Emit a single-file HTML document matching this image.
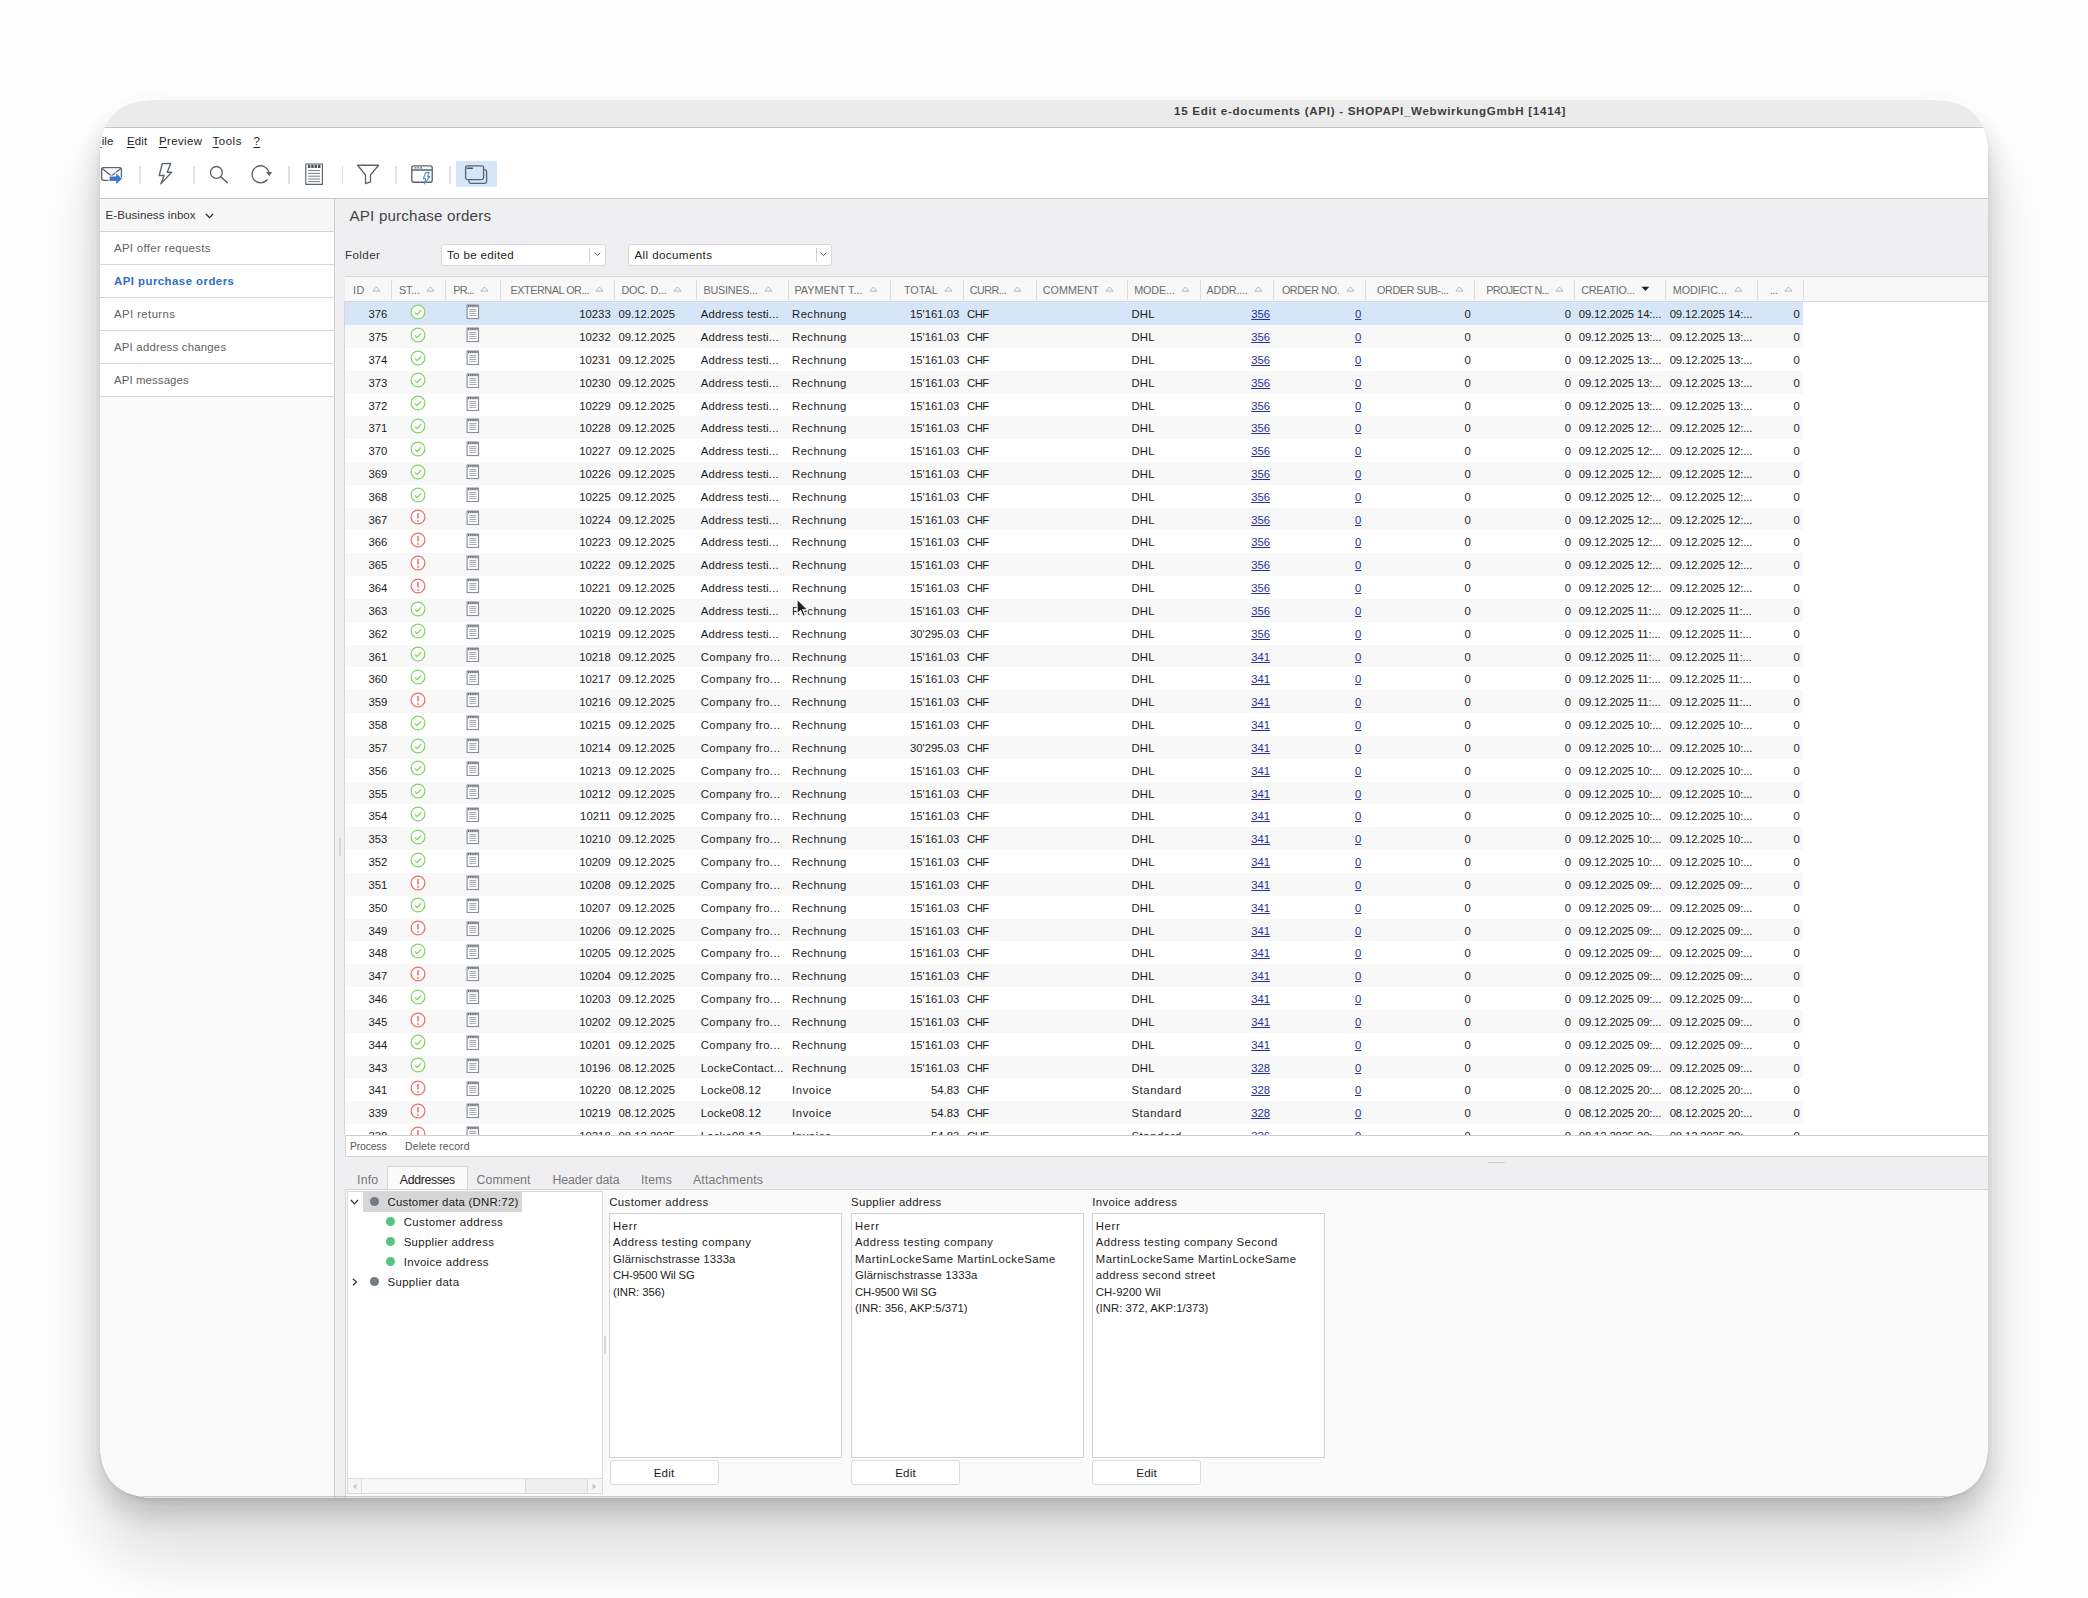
<!DOCTYPE html>
<html lang="en"><head><meta charset="utf-8"><title>15 Edit e-documents (API)</title>
<style>
*{box-sizing:border-box;margin:0;padding:0}
html,body{width:2088px;height:1598px;overflow:hidden;background:#fefefe}
body{position:relative;font-family:"Liberation Sans",sans-serif;font-size:11.3px;color:#1c1c1c}
#win{position:absolute;left:100px;top:100px;width:1888px;height:1397.6px;overflow:hidden;border-radius:46px;background:#fff;clip-path:path('M1828.0 0.0 L1838.4 0.2 L1845.5 0.9 L1851.6 2.0 L1857.1 3.5 L1862.0 5.4 L1866.5 7.8 L1870.6 10.6 L1874.2 13.8 L1877.4 17.4 L1880.2 21.5 L1882.6 26.0 L1884.5 30.9 L1886.0 36.4 L1887.1 42.5 L1887.8 49.6 L1888.0 60.0 L1888.0 1337.6 L1887.8 1348.0 L1887.1 1355.1 L1886.0 1361.2 L1884.5 1366.7 L1882.6 1371.6 L1880.2 1376.1 L1877.4 1380.2 L1874.2 1383.8 L1870.6 1387.0 L1866.5 1389.8 L1862.0 1392.2 L1857.1 1394.1 L1851.6 1395.6 L1845.5 1396.7 L1838.4 1397.4 L1828.0 1397.6 L60.0 1397.6 L49.6 1397.4 L42.5 1396.7 L36.4 1395.6 L30.9 1394.1 L26.0 1392.2 L21.5 1389.8 L17.4 1387.0 L13.8 1383.8 L10.6 1380.2 L7.8 1376.1 L5.4 1371.6 L3.5 1366.7 L2.0 1361.2 L0.9 1355.1 L0.2 1348.0 L0.0 1337.6 L0.0 60.0 L0.2 49.6 L0.9 42.5 L2.0 36.4 L3.5 30.9 L5.4 26.0 L7.8 21.5 L10.6 17.4 L13.8 13.8 L17.4 10.6 L21.5 7.8 L26.0 5.4 L30.9 3.5 L36.4 2.0 L42.5 0.9 L49.6 0.2 L60.0 0.0Z')}
#shadow{position:absolute;left:100px;top:100px;width:1888px;height:1397.6px;border-radius:52px;box-shadow:0 4px 8.1px -4.4px rgba(0,0,0,.19),0 52.4px 64.4px 5.8px rgba(0,0,0,.126),0 15.5px 21.8px 3.3px rgba(0,0,0,.131)}
.abs{position:absolute}
/* title */
#title{position:absolute;left:0;top:0;width:100%;height:28px;background:#ebebeb;border-bottom:1px solid #c4c4c4}
#title span{position:absolute;left:1074px;top:0;line-height:21.5px;font-weight:bold;font-size:11.6px;letter-spacing:.69px;color:#3e3e3e;white-space:nowrap}
/* menu */
#menu{position:absolute;left:0;top:28px;width:100%;height:27px;background:#fff}
#menu span{position:absolute;top:0;line-height:26.6px;font-size:11.4px;letter-spacing:.35px;color:#222;white-space:nowrap}
#menu u{text-decoration:underline;text-underline-offset:1.5px}
/* toolbar */
#tb{position:absolute;left:0;top:55px;width:100%;height:44px;background:#fff;border-bottom:1px solid #c9c9cb}
#tb svg{position:absolute;overflow:visible}
.sep{position:absolute;top:10.5px;width:1.6px;height:18px;background:#e1e1e3}
#act{position:absolute;left:356px;top:6.2px;width:41px;height:25.7px;background:#d5e6f8}
/* sidebar */
#side{position:absolute;left:0;top:99px;width:235px;bottom:0;background:#f9f9f9;border-right:1px solid #cfcfd1}
#side .hd{height:33px;line-height:32px;padding-left:5.6px;border-bottom:1px solid #d4d4d4;background:#f7f7f7;color:#333;font-size:11.5px;letter-spacing:.14px;white-space:nowrap}
#side .it{height:33px;line-height:32px;padding-left:14px;border-bottom:1px solid #d6d6d6;background:#fff;color:#616161;font-size:11.4px;letter-spacing:.36px;white-space:nowrap}
#side .it.on{color:#2f6ec4;font-weight:bold}
/* main */
#main{position:absolute;left:235px;top:99px;right:0;bottom:0;background:#efeff1}
#main h1{position:absolute;left:14.5px;top:5.5px;letter-spacing:.17px;font-weight:normal;font-size:15.2px;line-height:22px;color:#444;white-space:nowrap}
.lbl{position:absolute;white-space:nowrap}
.combo{position:absolute;height:22px;background:#fff;border:1px solid #d9d9db;border-radius:3px;line-height:20px;padding-left:5.5px;font-size:11.6px;letter-spacing:.25px;color:#222;white-space:nowrap}
.combo i{position:absolute;right:14.5px;top:3px;bottom:3px;width:1px;background:#d0d0d0}
.combo svg{position:absolute;right:4px;top:7.5px}
/* grid */
#grid{position:absolute;left:245px;top:175.5px;right:0;height:860px}
#ghead{position:absolute;left:0;top:0;right:0;height:26.7px;background:#f8f8f8;border-top:1.5px solid #d8d8da;border-bottom:1px solid #d8d8da}
.ht{position:absolute;top:1px;line-height:24px;white-space:nowrap;color:#6d6d6d;font-size:10.8px}
.ar{position:absolute;top:9.6px}
.hs{position:absolute;top:3px;height:20px;width:1px;background:#dcdcdc}
#gbody{position:absolute;left:-1px;top:26.7px;right:0;border-left:1px solid #d6d6d8;height:832.6px;background:#fff;overflow:hidden}
.r{position:absolute;left:0;width:1458.2px;height:22.83px;background:#fff}
.r.odd{background:#f8f8f8}
.r.sel{background:#d6e6f8}
.c{position:absolute;top:0;height:22.83px;line-height:25.6px;padding:0 3.3px 0 4.5px;white-space:nowrap;overflow:hidden}
.c.n{text-align:right}
.c.t{letter-spacing:.33px}
.c.lk u{color:#2a2f9a;text-decoration:underline}
.c.ic1,.c.ic2{padding:0;text-align:center;line-height:0}
.st{position:absolute;left:50%;margin-left:-7.6px;top:1.7px;width:16px;height:16px}
.dc{position:absolute;left:50%;margin-left:-6.4px;top:2.1px;width:13.6px;height:15.5px}
/* action bar */
#abar{position:absolute;left:244.5px;top:1034.8px;right:0;height:22.7px;background:#fff;border-top:1px solid #cfcfd1;border-bottom:1px solid #d4d4d6;border-left:1px solid #d8d8da}
#abar span{position:absolute;top:0;line-height:21.6px;font-size:10.4px;color:#585858;white-space:nowrap;letter-spacing:.12px}
/* tabs */
.tab{position:absolute;top:1066px;height:23.5px;line-height:28.4px;font-size:12.3px;color:#777;white-space:nowrap;letter-spacing:.25px}
.tab.on{line-height:26.4px;letter-spacing:-.2px;color:#222;background:#fafafa;border:1px solid #d6d6d8;border-bottom:0;border-radius:2px 2px 0 0;text-align:center}
#panel{position:absolute;left:244.5px;top:1088.5px;right:0;bottom:0;background:#fafafa;border-top:1px solid #d6d6d8;border-left:1px solid #d6d6d8}
#tree{position:absolute;left:1px;top:1px;width:256px;height:303px;background:#fff;border:1px solid #dadada}
.tr{position:absolute;left:0;height:20.1px;line-height:20.1px;white-space:nowrap;font-size:11.4px;letter-spacing:.3px;color:#1c1c1c}
.dot{position:absolute;border-radius:50%;width:9px;height:9px}
.addrl{position:absolute;top:4.3px;line-height:16px;font-size:11.4px;letter-spacing:.42px;white-space:nowrap}
.addr{position:absolute;top:23.7px;width:233.5px;height:245.3px;background:#fff;border:1px solid #d2d2d4;padding:3.5px 3.1px;font-size:11.3px;line-height:16.5px;white-space:nowrap;overflow:hidden}
.btn{position:absolute;top:270.5px;width:109px;height:24.5px;background:#fff;border:1px solid #dadadc;border-radius:3px;text-align:center;line-height:23px;font-size:11.6px;letter-spacing:.4px}
#hsb{position:absolute;left:0;right:0;bottom:0;height:14.5px;background:#efeff0;border-top:1px solid #dcdcdc}
#hsb b{position:absolute;top:0;bottom:0;display:block}
#hsb .l{left:0;width:14.5px;background:#f6f6f6;border-right:1px solid #dcdcdc}
#hsb .rr{right:0;width:15px;background:#f6f6f6;border-left:1px solid #dcdcdc}
#hsb .th{left:14.5px;width:163.5px;background:#f8f8f8;border-right:1px solid #dcdcdc}
#edge{position:absolute;left:0;bottom:0;width:100%;height:1.6px;background:rgba(120,125,135,.38)}

</style></head>
<body>
<div id="shadow"></div>
<div id="win">
<div id="title"><span style="letter-spacing:0.703px">15 Edit e-documents (API) - SHOPAPI_WebwirkungGmbH [1414]</span></div>
<div id="menu">
<span style="left:-5.5px;letter-spacing:0.186px"><u>F</u>ile</span>
<span style="left:27px;letter-spacing:0.186px"><u>E</u>dit</span>
<span style="left:59px;letter-spacing:0.397px"><u>P</u>review</span>
<span style="left:112.5px;letter-spacing:0.577px"><u>T</u>ools</span>
<span style="left:153.5px"><u>?</u></span>
</div>
<div id="tb">
<div id="act"></div>
<div class="sep" style="left:39px"></div>
<div class="sep" style="left:93px"></div>
<div class="sep" style="left:188px"></div>
<div class="sep" style="left:241.5px"></div>
<div class="sep" style="left:295px"></div>
<div class="sep" style="left:349px"></div>
<svg width="500" height="44" viewBox="0 0 500 44" style="left:0;top:0" fill="none" stroke="#5d636c" stroke-width="1.35" stroke-linejoin="round" stroke-linecap="round">
<!-- mail send -->
<rect x="1.6" y="12.6" width="19.8" height="12.8" rx="1.8"/>
<path d="M2.2 13.4l9.3 7.6 9.3-7.6"/>
<path d="M9.4 21h6.4v-3.6l6.6 6.3-6.6 6.3v-3.6H9.4z" fill="#3a78cc" stroke="#fff" stroke-width="1"/>
<!-- bolt -->
<path d="M62.3 8.7l8.4-.3-3.5 8.8h4.4L60.8 28.9l3.3-8.4h-4.9z"/>
<!-- search -->
<circle cx="116.4" cy="17.4" r="5.9"/>
<path d="M120.7 21.7l6.6 5.9" stroke-width="1.5"/>
<!-- refresh -->
<path d="M169 18.2a8.5 8.5 0 1 0-1.9 6.6"/>
<path d="M166 16.9h6.2l-3 4.3z" fill="#5d636c" stroke="none"/>
<!-- document -->
<rect x="205.8" y="9" width="16.6" height="20.4" fill="#fff" stroke-width="1.15"/>
<path d="M207.9 11.3h12.6" stroke="#4f555e" stroke-width="3.2" stroke-dasharray="2.5 .85" stroke-linecap="butt"/>
<path d="M208.6 15.6h11M208.6 18.4h11M208.6 21.2h11M208.6 24h11M208.6 26.6h11" stroke-width=".9" stroke="#666c75"/>
<!-- funnel -->
<path d="M257.6 10.2h21l-8.1 9.7v6.9l-5 1.8v-8.7z"/>
<!-- window bolt -->
<rect x="311.8" y="10.8" width="20.4" height="16.4" rx="2"/>
<path d="M312 15h20"/>
<path d="M315 12.9h1M317.8 12.9h1M320.6 12.9h1" stroke-width="1.1"/>
<path d="M325.6 17.6l3.6-.2-1.6 4.2h2.2l-5.6 7.4 1.5-5.2h-2.3z" stroke="#4b8ddd" fill="#fff" stroke-width="1.1"/>
<!-- windows -->
<path d="M369 25.2v1.4a1.8 1.8 0 0 0 1.8 1.8h14a1.8 1.8 0 0 0 1.8-1.8v-10a1.8 1.8 0 0 0-1.8-1.8h-.6"/>
<rect x="365.6" y="10.8" width="18" height="13.8" rx="1.8"/>
<path d="M367.4 13.2h5" stroke-width="1.5" stroke="#4f555e"/>
</svg>
</div>
<div id="side">
<div class="hd"><span style="letter-spacing:0.076px">E-Business inbox</span> <svg width="9" height="6" viewBox="0 0 9 6" style="margin-left:6px;vertical-align:0"><path d="M1 1l3.5 3.6L8 1" fill="none" stroke="#333" stroke-width="1.3"/></svg></div>
<div class="it" style="letter-spacing:0.325px">API offer requests</div>
<div class="it on" style="letter-spacing:0.471px">API purchase orders</div>
<div class="it" style="letter-spacing:0.402px">API returns</div>
<div class="it" style="letter-spacing:0.212px">API address changes</div>
<div class="it" style="letter-spacing:0.113px">API messages</div>
</div>
<div id="main">
<h1 style="letter-spacing:0.169px">API purchase orders</h1>
<span class="lbl" style="left:10px;top:45.3px;line-height:21px;font-size:11.6px;letter-spacing:0.405px;color:#333">Folder</span>
<div class="combo" style="left:105.5px;top:44.7px;width:165px;letter-spacing:0.321px">To be edited<i></i><svg width="7" height="5" viewBox="0 0 7 5"><path d="M.8.8l2.7 2.8L6.2.8" fill="none" stroke="#666" stroke-width="1"/></svg></div>
<div class="combo" style="left:293px;top:44.7px;width:204px;letter-spacing:0.389px">All documents<i></i><svg width="7" height="5" viewBox="0 0 7 5"><path d="M.8.8l2.7 2.8L6.2.8" fill="none" stroke="#666" stroke-width="1"/></svg></div>
</div>
<div id="grid">
<div id="ghead">
<span class="ht" style="left:8.0px;letter-spacing:0.59px">ID</span><svg class="ar" style="left:26.5px" width="9" height="6" viewBox="0 0 9 6"><path d="M.8 5.1L4.4.9 8 5.1z" fill="none" stroke="#b7b7b7" stroke-width="1"/></svg><i class="hs" style="left:45.6px"></i>
<span class="ht" style="left:54.0px;letter-spacing:-0.18px">ST...</span><svg class="ar" style="left:81.0px" width="9" height="6" viewBox="0 0 9 6"><path d="M.8 5.1L4.4.9 8 5.1z" fill="none" stroke="#b7b7b7" stroke-width="1"/></svg><i class="hs" style="left:100.4px"></i>
<span class="ht" style="left:108.3px;letter-spacing:-0.72px">PR...</span><svg class="ar" style="left:135.3px" width="9" height="6" viewBox="0 0 9 6"><path d="M.8 5.1L4.4.9 8 5.1z" fill="none" stroke="#b7b7b7" stroke-width="1"/></svg><i class="hs" style="left:154.9px"></i>
<span class="ht" style="left:165.6px;letter-spacing:-0.45px">EXTERNAL OR...</span><svg class="ar" style="left:250.4px" width="9" height="6" viewBox="0 0 9 6"><path d="M.8 5.1L4.4.9 8 5.1z" fill="none" stroke="#b7b7b7" stroke-width="1"/></svg><i class="hs" style="left:269.0px"></i>
<span class="ht" style="left:276.4px;letter-spacing:-0.17px">DOC. D...</span><svg class="ar" style="left:327.8px" width="9" height="6" viewBox="0 0 9 6"><path d="M.8 5.1L4.4.9 8 5.1z" fill="none" stroke="#b7b7b7" stroke-width="1"/></svg><i class="hs" style="left:351.2px"></i>
<span class="ht" style="left:358.6px;letter-spacing:-0.24px">BUSINES...</span><svg class="ar" style="left:418.8px" width="9" height="6" viewBox="0 0 9 6"><path d="M.8 5.1L4.4.9 8 5.1z" fill="none" stroke="#b7b7b7" stroke-width="1"/></svg><i class="hs" style="left:442.6px"></i>
<span class="ht" style="left:449.4px;letter-spacing:0.05px">PAYMENT T...</span><svg class="ar" style="left:524.3px" width="9" height="6" viewBox="0 0 9 6"><path d="M.8 5.1L4.4.9 8 5.1z" fill="none" stroke="#b7b7b7" stroke-width="1"/></svg><i class="hs" style="left:544.6px"></i>
<span class="ht" style="left:559.0px;letter-spacing:-0.04px">TOTAL</span><svg class="ar" style="left:599.0px" width="9" height="6" viewBox="0 0 9 6"><path d="M.8 5.1L4.4.9 8 5.1z" fill="none" stroke="#b7b7b7" stroke-width="1"/></svg><i class="hs" style="left:617.6px"></i>
<span class="ht" style="left:624.8px;letter-spacing:-0.54px">CURR...</span><svg class="ar" style="left:667.5px" width="9" height="6" viewBox="0 0 9 6"><path d="M.8 5.1L4.4.9 8 5.1z" fill="none" stroke="#b7b7b7" stroke-width="1"/></svg><i class="hs" style="left:690.8px"></i>
<span class="ht" style="left:697.8px;letter-spacing:0.03px">COMMENT</span><svg class="ar" style="left:760.4px" width="9" height="6" viewBox="0 0 9 6"><path d="M.8 5.1L4.4.9 8 5.1z" fill="none" stroke="#b7b7b7" stroke-width="1"/></svg><i class="hs" style="left:782.0px"></i>
<span class="ht" style="left:789.2px;letter-spacing:-0.11px">MODE...</span><svg class="ar" style="left:836.3px" width="9" height="6" viewBox="0 0 9 6"><path d="M.8 5.1L4.4.9 8 5.1z" fill="none" stroke="#b7b7b7" stroke-width="1"/></svg><i class="hs" style="left:855.4px"></i>
<span class="ht" style="left:861.6px;letter-spacing:-0.19px">ADDR....</span><svg class="ar" style="left:909.1px" width="9" height="6" viewBox="0 0 9 6"><path d="M.8 5.1L4.4.9 8 5.1z" fill="none" stroke="#b7b7b7" stroke-width="1"/></svg><i class="hs" style="left:928.4px"></i>
<span class="ht" style="left:936.9px;letter-spacing:-0.43px">ORDER NO.</span><svg class="ar" style="left:1000.5px" width="9" height="6" viewBox="0 0 9 6"><path d="M.8 5.1L4.4.9 8 5.1z" fill="none" stroke="#b7b7b7" stroke-width="1"/></svg><i class="hs" style="left:1019.6px"></i>
<span class="ht" style="left:1032.0px;letter-spacing:-0.41px">ORDER SUB-...</span><svg class="ar" style="left:1110.1px" width="9" height="6" viewBox="0 0 9 6"><path d="M.8 5.1L4.4.9 8 5.1z" fill="none" stroke="#b7b7b7" stroke-width="1"/></svg><i class="hs" style="left:1129.2px"></i>
<span class="ht" style="left:1141.2px;letter-spacing:-0.6px">PROJECT N...</span><svg class="ar" style="left:1210.2px" width="9" height="6" viewBox="0 0 9 6"><path d="M.8 5.1L4.4.9 8 5.1z" fill="none" stroke="#b7b7b7" stroke-width="1"/></svg><i class="hs" style="left:1229.3px"></i>
<span class="ht" style="left:1236.3px;letter-spacing:-0.27px">CREATIO...</span><svg class="ar" style="left:1295.6px" width="9" height="6" viewBox="0 0 9 6"><path d="M.5.8h7.8L4.4 5.1z" fill="#222"/></svg><i class="hs" style="left:1320.2px"></i>
<span class="ht" style="left:1327.7px;letter-spacing:-0.03px">MODIFIC...</span><svg class="ar" style="left:1388.6px" width="9" height="6" viewBox="0 0 9 6"><path d="M.8 5.1L4.4.9 8 5.1z" fill="none" stroke="#b7b7b7" stroke-width="1"/></svg><i class="hs" style="left:1411.9px"></i>
<span class="ht" style="left:1424.7px;letter-spacing:-0.37px">...</span><svg class="ar" style="left:1438.6px" width="9" height="6" viewBox="0 0 9 6"><path d="M.8 5.1L4.4.9 8 5.1z" fill="none" stroke="#b7b7b7" stroke-width="1"/></svg><i class="hs" style="left:1458.0px"></i>
</div>
<div id="gbody">
<div class="r sel" style="top:0.00px"><span class="c n" style="left:0.0px;width:45.6px">376</span><span class="c ic1" style="left:45.6px;width:54.8px"><svg class="st" viewBox="0 0 16 16"><circle cx="8" cy="8" r="6.9" fill="#fff" stroke="#84d465" stroke-width="1.25"/><path d="M4.9 8.4l2.2 2.2 4-4.4" fill="none" stroke="#84d465" stroke-width="1.3"/></svg></span><span class="c ic2" style="left:100.4px;width:54.5px"><svg class="dc" viewBox="0 0 14 16"><rect x="1.1" y="1.1" width="11.8" height="13.9" fill="#fff" stroke="#8a8f97" stroke-width="1.2"/><path d="M2 2.3h10" stroke="#5a6068" stroke-width="1.9" stroke-dasharray="1.5 .7"/><path d="M3.4 5.8h7.2M3.4 7.8h7.2M3.4 9.8h7.2M3.4 11.8h7.2" stroke="#a9adb2" stroke-width="1.05"/></svg></span><span class="c n" style="left:154.9px;width:114.1px">10233</span><span class="c d" style="left:269.0px;width:82.2px">09.12.2025</span><span class="c t" style="left:351.2px;width:91.4px;letter-spacing:0.219px">Address testi...</span><span class="c t" style="left:442.6px;width:102.0px;letter-spacing:0.398px">Rechnung</span><span class="c n" style="left:544.6px;width:73.0px">15&#x27;161.03</span><span class="c t" style="left:617.6px;width:73.2px;letter-spacing:-0.559px">CHF</span><span class="c t" style="left:782.0px;width:73.4px;letter-spacing:0.195px">DHL</span><span class="c n lk" style="left:855.4px;width:73.0px"><u>356</u></span><span class="c n lk" style="left:928.4px;width:91.2px"><u>0</u></span><span class="c n" style="left:1019.6px;width:109.6px">0</span><span class="c n" style="left:1129.2px;width:100.1px">0</span><span class="c d" style="left:1229.3px;width:90.9px;letter-spacing:-0.132px">09.12.2025 14:...</span><span class="c d" style="left:1320.2px;width:91.7px;letter-spacing:-0.132px">09.12.2025 14:...</span><span class="c n" style="left:1411.9px;width:46.1px">0</span></div>
<div class="r odd" style="top:22.83px"><span class="c n" style="left:0.0px;width:45.6px">375</span><span class="c ic1" style="left:45.6px;width:54.8px"><svg class="st" viewBox="0 0 16 16"><circle cx="8" cy="8" r="6.9" fill="#fff" stroke="#84d465" stroke-width="1.25"/><path d="M4.9 8.4l2.2 2.2 4-4.4" fill="none" stroke="#84d465" stroke-width="1.3"/></svg></span><span class="c ic2" style="left:100.4px;width:54.5px"><svg class="dc" viewBox="0 0 14 16"><rect x="1.1" y="1.1" width="11.8" height="13.9" fill="#fff" stroke="#8a8f97" stroke-width="1.2"/><path d="M2 2.3h10" stroke="#5a6068" stroke-width="1.9" stroke-dasharray="1.5 .7"/><path d="M3.4 5.8h7.2M3.4 7.8h7.2M3.4 9.8h7.2M3.4 11.8h7.2" stroke="#a9adb2" stroke-width="1.05"/></svg></span><span class="c n" style="left:154.9px;width:114.1px">10232</span><span class="c d" style="left:269.0px;width:82.2px">09.12.2025</span><span class="c t" style="left:351.2px;width:91.4px;letter-spacing:0.219px">Address testi...</span><span class="c t" style="left:442.6px;width:102.0px;letter-spacing:0.398px">Rechnung</span><span class="c n" style="left:544.6px;width:73.0px">15&#x27;161.03</span><span class="c t" style="left:617.6px;width:73.2px;letter-spacing:-0.559px">CHF</span><span class="c t" style="left:782.0px;width:73.4px;letter-spacing:0.195px">DHL</span><span class="c n lk" style="left:855.4px;width:73.0px"><u>356</u></span><span class="c n lk" style="left:928.4px;width:91.2px"><u>0</u></span><span class="c n" style="left:1019.6px;width:109.6px">0</span><span class="c n" style="left:1129.2px;width:100.1px">0</span><span class="c d" style="left:1229.3px;width:90.9px;letter-spacing:-0.132px">09.12.2025 13:...</span><span class="c d" style="left:1320.2px;width:91.7px;letter-spacing:-0.132px">09.12.2025 13:...</span><span class="c n" style="left:1411.9px;width:46.1px">0</span></div>
<div class="r" style="top:45.66px"><span class="c n" style="left:0.0px;width:45.6px">374</span><span class="c ic1" style="left:45.6px;width:54.8px"><svg class="st" viewBox="0 0 16 16"><circle cx="8" cy="8" r="6.9" fill="#fff" stroke="#84d465" stroke-width="1.25"/><path d="M4.9 8.4l2.2 2.2 4-4.4" fill="none" stroke="#84d465" stroke-width="1.3"/></svg></span><span class="c ic2" style="left:100.4px;width:54.5px"><svg class="dc" viewBox="0 0 14 16"><rect x="1.1" y="1.1" width="11.8" height="13.9" fill="#fff" stroke="#8a8f97" stroke-width="1.2"/><path d="M2 2.3h10" stroke="#5a6068" stroke-width="1.9" stroke-dasharray="1.5 .7"/><path d="M3.4 5.8h7.2M3.4 7.8h7.2M3.4 9.8h7.2M3.4 11.8h7.2" stroke="#a9adb2" stroke-width="1.05"/></svg></span><span class="c n" style="left:154.9px;width:114.1px">10231</span><span class="c d" style="left:269.0px;width:82.2px">09.12.2025</span><span class="c t" style="left:351.2px;width:91.4px;letter-spacing:0.219px">Address testi...</span><span class="c t" style="left:442.6px;width:102.0px;letter-spacing:0.398px">Rechnung</span><span class="c n" style="left:544.6px;width:73.0px">15&#x27;161.03</span><span class="c t" style="left:617.6px;width:73.2px;letter-spacing:-0.559px">CHF</span><span class="c t" style="left:782.0px;width:73.4px;letter-spacing:0.195px">DHL</span><span class="c n lk" style="left:855.4px;width:73.0px"><u>356</u></span><span class="c n lk" style="left:928.4px;width:91.2px"><u>0</u></span><span class="c n" style="left:1019.6px;width:109.6px">0</span><span class="c n" style="left:1129.2px;width:100.1px">0</span><span class="c d" style="left:1229.3px;width:90.9px;letter-spacing:-0.132px">09.12.2025 13:...</span><span class="c d" style="left:1320.2px;width:91.7px;letter-spacing:-0.132px">09.12.2025 13:...</span><span class="c n" style="left:1411.9px;width:46.1px">0</span></div>
<div class="r odd" style="top:68.49px"><span class="c n" style="left:0.0px;width:45.6px">373</span><span class="c ic1" style="left:45.6px;width:54.8px"><svg class="st" viewBox="0 0 16 16"><circle cx="8" cy="8" r="6.9" fill="#fff" stroke="#84d465" stroke-width="1.25"/><path d="M4.9 8.4l2.2 2.2 4-4.4" fill="none" stroke="#84d465" stroke-width="1.3"/></svg></span><span class="c ic2" style="left:100.4px;width:54.5px"><svg class="dc" viewBox="0 0 14 16"><rect x="1.1" y="1.1" width="11.8" height="13.9" fill="#fff" stroke="#8a8f97" stroke-width="1.2"/><path d="M2 2.3h10" stroke="#5a6068" stroke-width="1.9" stroke-dasharray="1.5 .7"/><path d="M3.4 5.8h7.2M3.4 7.8h7.2M3.4 9.8h7.2M3.4 11.8h7.2" stroke="#a9adb2" stroke-width="1.05"/></svg></span><span class="c n" style="left:154.9px;width:114.1px">10230</span><span class="c d" style="left:269.0px;width:82.2px">09.12.2025</span><span class="c t" style="left:351.2px;width:91.4px;letter-spacing:0.219px">Address testi...</span><span class="c t" style="left:442.6px;width:102.0px;letter-spacing:0.398px">Rechnung</span><span class="c n" style="left:544.6px;width:73.0px">15&#x27;161.03</span><span class="c t" style="left:617.6px;width:73.2px;letter-spacing:-0.559px">CHF</span><span class="c t" style="left:782.0px;width:73.4px;letter-spacing:0.195px">DHL</span><span class="c n lk" style="left:855.4px;width:73.0px"><u>356</u></span><span class="c n lk" style="left:928.4px;width:91.2px"><u>0</u></span><span class="c n" style="left:1019.6px;width:109.6px">0</span><span class="c n" style="left:1129.2px;width:100.1px">0</span><span class="c d" style="left:1229.3px;width:90.9px;letter-spacing:-0.132px">09.12.2025 13:...</span><span class="c d" style="left:1320.2px;width:91.7px;letter-spacing:-0.132px">09.12.2025 13:...</span><span class="c n" style="left:1411.9px;width:46.1px">0</span></div>
<div class="r" style="top:91.32px"><span class="c n" style="left:0.0px;width:45.6px">372</span><span class="c ic1" style="left:45.6px;width:54.8px"><svg class="st" viewBox="0 0 16 16"><circle cx="8" cy="8" r="6.9" fill="#fff" stroke="#84d465" stroke-width="1.25"/><path d="M4.9 8.4l2.2 2.2 4-4.4" fill="none" stroke="#84d465" stroke-width="1.3"/></svg></span><span class="c ic2" style="left:100.4px;width:54.5px"><svg class="dc" viewBox="0 0 14 16"><rect x="1.1" y="1.1" width="11.8" height="13.9" fill="#fff" stroke="#8a8f97" stroke-width="1.2"/><path d="M2 2.3h10" stroke="#5a6068" stroke-width="1.9" stroke-dasharray="1.5 .7"/><path d="M3.4 5.8h7.2M3.4 7.8h7.2M3.4 9.8h7.2M3.4 11.8h7.2" stroke="#a9adb2" stroke-width="1.05"/></svg></span><span class="c n" style="left:154.9px;width:114.1px">10229</span><span class="c d" style="left:269.0px;width:82.2px">09.12.2025</span><span class="c t" style="left:351.2px;width:91.4px;letter-spacing:0.219px">Address testi...</span><span class="c t" style="left:442.6px;width:102.0px;letter-spacing:0.398px">Rechnung</span><span class="c n" style="left:544.6px;width:73.0px">15&#x27;161.03</span><span class="c t" style="left:617.6px;width:73.2px;letter-spacing:-0.559px">CHF</span><span class="c t" style="left:782.0px;width:73.4px;letter-spacing:0.195px">DHL</span><span class="c n lk" style="left:855.4px;width:73.0px"><u>356</u></span><span class="c n lk" style="left:928.4px;width:91.2px"><u>0</u></span><span class="c n" style="left:1019.6px;width:109.6px">0</span><span class="c n" style="left:1129.2px;width:100.1px">0</span><span class="c d" style="left:1229.3px;width:90.9px;letter-spacing:-0.132px">09.12.2025 13:...</span><span class="c d" style="left:1320.2px;width:91.7px;letter-spacing:-0.132px">09.12.2025 13:...</span><span class="c n" style="left:1411.9px;width:46.1px">0</span></div>
<div class="r odd" style="top:114.15px"><span class="c n" style="left:0.0px;width:45.6px">371</span><span class="c ic1" style="left:45.6px;width:54.8px"><svg class="st" viewBox="0 0 16 16"><circle cx="8" cy="8" r="6.9" fill="#fff" stroke="#84d465" stroke-width="1.25"/><path d="M4.9 8.4l2.2 2.2 4-4.4" fill="none" stroke="#84d465" stroke-width="1.3"/></svg></span><span class="c ic2" style="left:100.4px;width:54.5px"><svg class="dc" viewBox="0 0 14 16"><rect x="1.1" y="1.1" width="11.8" height="13.9" fill="#fff" stroke="#8a8f97" stroke-width="1.2"/><path d="M2 2.3h10" stroke="#5a6068" stroke-width="1.9" stroke-dasharray="1.5 .7"/><path d="M3.4 5.8h7.2M3.4 7.8h7.2M3.4 9.8h7.2M3.4 11.8h7.2" stroke="#a9adb2" stroke-width="1.05"/></svg></span><span class="c n" style="left:154.9px;width:114.1px">10228</span><span class="c d" style="left:269.0px;width:82.2px">09.12.2025</span><span class="c t" style="left:351.2px;width:91.4px;letter-spacing:0.219px">Address testi...</span><span class="c t" style="left:442.6px;width:102.0px;letter-spacing:0.398px">Rechnung</span><span class="c n" style="left:544.6px;width:73.0px">15&#x27;161.03</span><span class="c t" style="left:617.6px;width:73.2px;letter-spacing:-0.559px">CHF</span><span class="c t" style="left:782.0px;width:73.4px;letter-spacing:0.195px">DHL</span><span class="c n lk" style="left:855.4px;width:73.0px"><u>356</u></span><span class="c n lk" style="left:928.4px;width:91.2px"><u>0</u></span><span class="c n" style="left:1019.6px;width:109.6px">0</span><span class="c n" style="left:1129.2px;width:100.1px">0</span><span class="c d" style="left:1229.3px;width:90.9px;letter-spacing:-0.132px">09.12.2025 12:...</span><span class="c d" style="left:1320.2px;width:91.7px;letter-spacing:-0.132px">09.12.2025 12:...</span><span class="c n" style="left:1411.9px;width:46.1px">0</span></div>
<div class="r" style="top:136.98px"><span class="c n" style="left:0.0px;width:45.6px">370</span><span class="c ic1" style="left:45.6px;width:54.8px"><svg class="st" viewBox="0 0 16 16"><circle cx="8" cy="8" r="6.9" fill="#fff" stroke="#84d465" stroke-width="1.25"/><path d="M4.9 8.4l2.2 2.2 4-4.4" fill="none" stroke="#84d465" stroke-width="1.3"/></svg></span><span class="c ic2" style="left:100.4px;width:54.5px"><svg class="dc" viewBox="0 0 14 16"><rect x="1.1" y="1.1" width="11.8" height="13.9" fill="#fff" stroke="#8a8f97" stroke-width="1.2"/><path d="M2 2.3h10" stroke="#5a6068" stroke-width="1.9" stroke-dasharray="1.5 .7"/><path d="M3.4 5.8h7.2M3.4 7.8h7.2M3.4 9.8h7.2M3.4 11.8h7.2" stroke="#a9adb2" stroke-width="1.05"/></svg></span><span class="c n" style="left:154.9px;width:114.1px">10227</span><span class="c d" style="left:269.0px;width:82.2px">09.12.2025</span><span class="c t" style="left:351.2px;width:91.4px;letter-spacing:0.219px">Address testi...</span><span class="c t" style="left:442.6px;width:102.0px;letter-spacing:0.398px">Rechnung</span><span class="c n" style="left:544.6px;width:73.0px">15&#x27;161.03</span><span class="c t" style="left:617.6px;width:73.2px;letter-spacing:-0.559px">CHF</span><span class="c t" style="left:782.0px;width:73.4px;letter-spacing:0.195px">DHL</span><span class="c n lk" style="left:855.4px;width:73.0px"><u>356</u></span><span class="c n lk" style="left:928.4px;width:91.2px"><u>0</u></span><span class="c n" style="left:1019.6px;width:109.6px">0</span><span class="c n" style="left:1129.2px;width:100.1px">0</span><span class="c d" style="left:1229.3px;width:90.9px;letter-spacing:-0.132px">09.12.2025 12:...</span><span class="c d" style="left:1320.2px;width:91.7px;letter-spacing:-0.132px">09.12.2025 12:...</span><span class="c n" style="left:1411.9px;width:46.1px">0</span></div>
<div class="r odd" style="top:159.81px"><span class="c n" style="left:0.0px;width:45.6px">369</span><span class="c ic1" style="left:45.6px;width:54.8px"><svg class="st" viewBox="0 0 16 16"><circle cx="8" cy="8" r="6.9" fill="#fff" stroke="#84d465" stroke-width="1.25"/><path d="M4.9 8.4l2.2 2.2 4-4.4" fill="none" stroke="#84d465" stroke-width="1.3"/></svg></span><span class="c ic2" style="left:100.4px;width:54.5px"><svg class="dc" viewBox="0 0 14 16"><rect x="1.1" y="1.1" width="11.8" height="13.9" fill="#fff" stroke="#8a8f97" stroke-width="1.2"/><path d="M2 2.3h10" stroke="#5a6068" stroke-width="1.9" stroke-dasharray="1.5 .7"/><path d="M3.4 5.8h7.2M3.4 7.8h7.2M3.4 9.8h7.2M3.4 11.8h7.2" stroke="#a9adb2" stroke-width="1.05"/></svg></span><span class="c n" style="left:154.9px;width:114.1px">10226</span><span class="c d" style="left:269.0px;width:82.2px">09.12.2025</span><span class="c t" style="left:351.2px;width:91.4px;letter-spacing:0.219px">Address testi...</span><span class="c t" style="left:442.6px;width:102.0px;letter-spacing:0.398px">Rechnung</span><span class="c n" style="left:544.6px;width:73.0px">15&#x27;161.03</span><span class="c t" style="left:617.6px;width:73.2px;letter-spacing:-0.559px">CHF</span><span class="c t" style="left:782.0px;width:73.4px;letter-spacing:0.195px">DHL</span><span class="c n lk" style="left:855.4px;width:73.0px"><u>356</u></span><span class="c n lk" style="left:928.4px;width:91.2px"><u>0</u></span><span class="c n" style="left:1019.6px;width:109.6px">0</span><span class="c n" style="left:1129.2px;width:100.1px">0</span><span class="c d" style="left:1229.3px;width:90.9px;letter-spacing:-0.132px">09.12.2025 12:...</span><span class="c d" style="left:1320.2px;width:91.7px;letter-spacing:-0.132px">09.12.2025 12:...</span><span class="c n" style="left:1411.9px;width:46.1px">0</span></div>
<div class="r" style="top:182.64px"><span class="c n" style="left:0.0px;width:45.6px">368</span><span class="c ic1" style="left:45.6px;width:54.8px"><svg class="st" viewBox="0 0 16 16"><circle cx="8" cy="8" r="6.9" fill="#fff" stroke="#84d465" stroke-width="1.25"/><path d="M4.9 8.4l2.2 2.2 4-4.4" fill="none" stroke="#84d465" stroke-width="1.3"/></svg></span><span class="c ic2" style="left:100.4px;width:54.5px"><svg class="dc" viewBox="0 0 14 16"><rect x="1.1" y="1.1" width="11.8" height="13.9" fill="#fff" stroke="#8a8f97" stroke-width="1.2"/><path d="M2 2.3h10" stroke="#5a6068" stroke-width="1.9" stroke-dasharray="1.5 .7"/><path d="M3.4 5.8h7.2M3.4 7.8h7.2M3.4 9.8h7.2M3.4 11.8h7.2" stroke="#a9adb2" stroke-width="1.05"/></svg></span><span class="c n" style="left:154.9px;width:114.1px">10225</span><span class="c d" style="left:269.0px;width:82.2px">09.12.2025</span><span class="c t" style="left:351.2px;width:91.4px;letter-spacing:0.219px">Address testi...</span><span class="c t" style="left:442.6px;width:102.0px;letter-spacing:0.398px">Rechnung</span><span class="c n" style="left:544.6px;width:73.0px">15&#x27;161.03</span><span class="c t" style="left:617.6px;width:73.2px;letter-spacing:-0.559px">CHF</span><span class="c t" style="left:782.0px;width:73.4px;letter-spacing:0.195px">DHL</span><span class="c n lk" style="left:855.4px;width:73.0px"><u>356</u></span><span class="c n lk" style="left:928.4px;width:91.2px"><u>0</u></span><span class="c n" style="left:1019.6px;width:109.6px">0</span><span class="c n" style="left:1129.2px;width:100.1px">0</span><span class="c d" style="left:1229.3px;width:90.9px;letter-spacing:-0.132px">09.12.2025 12:...</span><span class="c d" style="left:1320.2px;width:91.7px;letter-spacing:-0.132px">09.12.2025 12:...</span><span class="c n" style="left:1411.9px;width:46.1px">0</span></div>
<div class="r odd" style="top:205.47px"><span class="c n" style="left:0.0px;width:45.6px">367</span><span class="c ic1" style="left:45.6px;width:54.8px"><svg class="st" viewBox="0 0 16 16"><circle cx="8" cy="8" r="6.9" fill="#fff" stroke="#f06a6a" stroke-width="1.25"/><path d="M8 3.9v5.7" fill="none" stroke="#f06a6a" stroke-width="1.5"/><circle cx="8" cy="11.9" r=".95" fill="#f06a6a"/></svg></span><span class="c ic2" style="left:100.4px;width:54.5px"><svg class="dc" viewBox="0 0 14 16"><rect x="1.1" y="1.1" width="11.8" height="13.9" fill="#fff" stroke="#8a8f97" stroke-width="1.2"/><path d="M2 2.3h10" stroke="#5a6068" stroke-width="1.9" stroke-dasharray="1.5 .7"/><path d="M3.4 5.8h7.2M3.4 7.8h7.2M3.4 9.8h7.2M3.4 11.8h7.2" stroke="#a9adb2" stroke-width="1.05"/></svg></span><span class="c n" style="left:154.9px;width:114.1px">10224</span><span class="c d" style="left:269.0px;width:82.2px">09.12.2025</span><span class="c t" style="left:351.2px;width:91.4px;letter-spacing:0.219px">Address testi...</span><span class="c t" style="left:442.6px;width:102.0px;letter-spacing:0.398px">Rechnung</span><span class="c n" style="left:544.6px;width:73.0px">15&#x27;161.03</span><span class="c t" style="left:617.6px;width:73.2px;letter-spacing:-0.559px">CHF</span><span class="c t" style="left:782.0px;width:73.4px;letter-spacing:0.195px">DHL</span><span class="c n lk" style="left:855.4px;width:73.0px"><u>356</u></span><span class="c n lk" style="left:928.4px;width:91.2px"><u>0</u></span><span class="c n" style="left:1019.6px;width:109.6px">0</span><span class="c n" style="left:1129.2px;width:100.1px">0</span><span class="c d" style="left:1229.3px;width:90.9px;letter-spacing:-0.132px">09.12.2025 12:...</span><span class="c d" style="left:1320.2px;width:91.7px;letter-spacing:-0.132px">09.12.2025 12:...</span><span class="c n" style="left:1411.9px;width:46.1px">0</span></div>
<div class="r" style="top:228.30px"><span class="c n" style="left:0.0px;width:45.6px">366</span><span class="c ic1" style="left:45.6px;width:54.8px"><svg class="st" viewBox="0 0 16 16"><circle cx="8" cy="8" r="6.9" fill="#fff" stroke="#f06a6a" stroke-width="1.25"/><path d="M8 3.9v5.7" fill="none" stroke="#f06a6a" stroke-width="1.5"/><circle cx="8" cy="11.9" r=".95" fill="#f06a6a"/></svg></span><span class="c ic2" style="left:100.4px;width:54.5px"><svg class="dc" viewBox="0 0 14 16"><rect x="1.1" y="1.1" width="11.8" height="13.9" fill="#fff" stroke="#8a8f97" stroke-width="1.2"/><path d="M2 2.3h10" stroke="#5a6068" stroke-width="1.9" stroke-dasharray="1.5 .7"/><path d="M3.4 5.8h7.2M3.4 7.8h7.2M3.4 9.8h7.2M3.4 11.8h7.2" stroke="#a9adb2" stroke-width="1.05"/></svg></span><span class="c n" style="left:154.9px;width:114.1px">10223</span><span class="c d" style="left:269.0px;width:82.2px">09.12.2025</span><span class="c t" style="left:351.2px;width:91.4px;letter-spacing:0.219px">Address testi...</span><span class="c t" style="left:442.6px;width:102.0px;letter-spacing:0.398px">Rechnung</span><span class="c n" style="left:544.6px;width:73.0px">15&#x27;161.03</span><span class="c t" style="left:617.6px;width:73.2px;letter-spacing:-0.559px">CHF</span><span class="c t" style="left:782.0px;width:73.4px;letter-spacing:0.195px">DHL</span><span class="c n lk" style="left:855.4px;width:73.0px"><u>356</u></span><span class="c n lk" style="left:928.4px;width:91.2px"><u>0</u></span><span class="c n" style="left:1019.6px;width:109.6px">0</span><span class="c n" style="left:1129.2px;width:100.1px">0</span><span class="c d" style="left:1229.3px;width:90.9px;letter-spacing:-0.132px">09.12.2025 12:...</span><span class="c d" style="left:1320.2px;width:91.7px;letter-spacing:-0.132px">09.12.2025 12:...</span><span class="c n" style="left:1411.9px;width:46.1px">0</span></div>
<div class="r odd" style="top:251.13px"><span class="c n" style="left:0.0px;width:45.6px">365</span><span class="c ic1" style="left:45.6px;width:54.8px"><svg class="st" viewBox="0 0 16 16"><circle cx="8" cy="8" r="6.9" fill="#fff" stroke="#f06a6a" stroke-width="1.25"/><path d="M8 3.9v5.7" fill="none" stroke="#f06a6a" stroke-width="1.5"/><circle cx="8" cy="11.9" r=".95" fill="#f06a6a"/></svg></span><span class="c ic2" style="left:100.4px;width:54.5px"><svg class="dc" viewBox="0 0 14 16"><rect x="1.1" y="1.1" width="11.8" height="13.9" fill="#fff" stroke="#8a8f97" stroke-width="1.2"/><path d="M2 2.3h10" stroke="#5a6068" stroke-width="1.9" stroke-dasharray="1.5 .7"/><path d="M3.4 5.8h7.2M3.4 7.8h7.2M3.4 9.8h7.2M3.4 11.8h7.2" stroke="#a9adb2" stroke-width="1.05"/></svg></span><span class="c n" style="left:154.9px;width:114.1px">10222</span><span class="c d" style="left:269.0px;width:82.2px">09.12.2025</span><span class="c t" style="left:351.2px;width:91.4px;letter-spacing:0.219px">Address testi...</span><span class="c t" style="left:442.6px;width:102.0px;letter-spacing:0.398px">Rechnung</span><span class="c n" style="left:544.6px;width:73.0px">15&#x27;161.03</span><span class="c t" style="left:617.6px;width:73.2px;letter-spacing:-0.559px">CHF</span><span class="c t" style="left:782.0px;width:73.4px;letter-spacing:0.195px">DHL</span><span class="c n lk" style="left:855.4px;width:73.0px"><u>356</u></span><span class="c n lk" style="left:928.4px;width:91.2px"><u>0</u></span><span class="c n" style="left:1019.6px;width:109.6px">0</span><span class="c n" style="left:1129.2px;width:100.1px">0</span><span class="c d" style="left:1229.3px;width:90.9px;letter-spacing:-0.132px">09.12.2025 12:...</span><span class="c d" style="left:1320.2px;width:91.7px;letter-spacing:-0.132px">09.12.2025 12:...</span><span class="c n" style="left:1411.9px;width:46.1px">0</span></div>
<div class="r" style="top:273.96px"><span class="c n" style="left:0.0px;width:45.6px">364</span><span class="c ic1" style="left:45.6px;width:54.8px"><svg class="st" viewBox="0 0 16 16"><circle cx="8" cy="8" r="6.9" fill="#fff" stroke="#f06a6a" stroke-width="1.25"/><path d="M8 3.9v5.7" fill="none" stroke="#f06a6a" stroke-width="1.5"/><circle cx="8" cy="11.9" r=".95" fill="#f06a6a"/></svg></span><span class="c ic2" style="left:100.4px;width:54.5px"><svg class="dc" viewBox="0 0 14 16"><rect x="1.1" y="1.1" width="11.8" height="13.9" fill="#fff" stroke="#8a8f97" stroke-width="1.2"/><path d="M2 2.3h10" stroke="#5a6068" stroke-width="1.9" stroke-dasharray="1.5 .7"/><path d="M3.4 5.8h7.2M3.4 7.8h7.2M3.4 9.8h7.2M3.4 11.8h7.2" stroke="#a9adb2" stroke-width="1.05"/></svg></span><span class="c n" style="left:154.9px;width:114.1px">10221</span><span class="c d" style="left:269.0px;width:82.2px">09.12.2025</span><span class="c t" style="left:351.2px;width:91.4px;letter-spacing:0.219px">Address testi...</span><span class="c t" style="left:442.6px;width:102.0px;letter-spacing:0.398px">Rechnung</span><span class="c n" style="left:544.6px;width:73.0px">15&#x27;161.03</span><span class="c t" style="left:617.6px;width:73.2px;letter-spacing:-0.559px">CHF</span><span class="c t" style="left:782.0px;width:73.4px;letter-spacing:0.195px">DHL</span><span class="c n lk" style="left:855.4px;width:73.0px"><u>356</u></span><span class="c n lk" style="left:928.4px;width:91.2px"><u>0</u></span><span class="c n" style="left:1019.6px;width:109.6px">0</span><span class="c n" style="left:1129.2px;width:100.1px">0</span><span class="c d" style="left:1229.3px;width:90.9px;letter-spacing:-0.132px">09.12.2025 12:...</span><span class="c d" style="left:1320.2px;width:91.7px;letter-spacing:-0.132px">09.12.2025 12:...</span><span class="c n" style="left:1411.9px;width:46.1px">0</span></div>
<div class="r odd" style="top:296.79px"><span class="c n" style="left:0.0px;width:45.6px">363</span><span class="c ic1" style="left:45.6px;width:54.8px"><svg class="st" viewBox="0 0 16 16"><circle cx="8" cy="8" r="6.9" fill="#fff" stroke="#84d465" stroke-width="1.25"/><path d="M4.9 8.4l2.2 2.2 4-4.4" fill="none" stroke="#84d465" stroke-width="1.3"/></svg></span><span class="c ic2" style="left:100.4px;width:54.5px"><svg class="dc" viewBox="0 0 14 16"><rect x="1.1" y="1.1" width="11.8" height="13.9" fill="#fff" stroke="#8a8f97" stroke-width="1.2"/><path d="M2 2.3h10" stroke="#5a6068" stroke-width="1.9" stroke-dasharray="1.5 .7"/><path d="M3.4 5.8h7.2M3.4 7.8h7.2M3.4 9.8h7.2M3.4 11.8h7.2" stroke="#a9adb2" stroke-width="1.05"/></svg></span><span class="c n" style="left:154.9px;width:114.1px">10220</span><span class="c d" style="left:269.0px;width:82.2px">09.12.2025</span><span class="c t" style="left:351.2px;width:91.4px;letter-spacing:0.219px">Address testi...</span><span class="c t" style="left:442.6px;width:102.0px;letter-spacing:0.398px">Rechnung</span><span class="c n" style="left:544.6px;width:73.0px">15&#x27;161.03</span><span class="c t" style="left:617.6px;width:73.2px;letter-spacing:-0.559px">CHF</span><span class="c t" style="left:782.0px;width:73.4px;letter-spacing:0.195px">DHL</span><span class="c n lk" style="left:855.4px;width:73.0px"><u>356</u></span><span class="c n lk" style="left:928.4px;width:91.2px"><u>0</u></span><span class="c n" style="left:1019.6px;width:109.6px">0</span><span class="c n" style="left:1129.2px;width:100.1px">0</span><span class="c d" style="left:1229.3px;width:90.9px;letter-spacing:-0.132px">09.12.2025 11:...</span><span class="c d" style="left:1320.2px;width:91.7px;letter-spacing:-0.132px">09.12.2025 11:...</span><span class="c n" style="left:1411.9px;width:46.1px">0</span></div>
<div class="r" style="top:319.62px"><span class="c n" style="left:0.0px;width:45.6px">362</span><span class="c ic1" style="left:45.6px;width:54.8px"><svg class="st" viewBox="0 0 16 16"><circle cx="8" cy="8" r="6.9" fill="#fff" stroke="#84d465" stroke-width="1.25"/><path d="M4.9 8.4l2.2 2.2 4-4.4" fill="none" stroke="#84d465" stroke-width="1.3"/></svg></span><span class="c ic2" style="left:100.4px;width:54.5px"><svg class="dc" viewBox="0 0 14 16"><rect x="1.1" y="1.1" width="11.8" height="13.9" fill="#fff" stroke="#8a8f97" stroke-width="1.2"/><path d="M2 2.3h10" stroke="#5a6068" stroke-width="1.9" stroke-dasharray="1.5 .7"/><path d="M3.4 5.8h7.2M3.4 7.8h7.2M3.4 9.8h7.2M3.4 11.8h7.2" stroke="#a9adb2" stroke-width="1.05"/></svg></span><span class="c n" style="left:154.9px;width:114.1px">10219</span><span class="c d" style="left:269.0px;width:82.2px">09.12.2025</span><span class="c t" style="left:351.2px;width:91.4px;letter-spacing:0.219px">Address testi...</span><span class="c t" style="left:442.6px;width:102.0px;letter-spacing:0.398px">Rechnung</span><span class="c n" style="left:544.6px;width:73.0px">30&#x27;295.03</span><span class="c t" style="left:617.6px;width:73.2px;letter-spacing:-0.559px">CHF</span><span class="c t" style="left:782.0px;width:73.4px;letter-spacing:0.195px">DHL</span><span class="c n lk" style="left:855.4px;width:73.0px"><u>356</u></span><span class="c n lk" style="left:928.4px;width:91.2px"><u>0</u></span><span class="c n" style="left:1019.6px;width:109.6px">0</span><span class="c n" style="left:1129.2px;width:100.1px">0</span><span class="c d" style="left:1229.3px;width:90.9px;letter-spacing:-0.132px">09.12.2025 11:...</span><span class="c d" style="left:1320.2px;width:91.7px;letter-spacing:-0.132px">09.12.2025 11:...</span><span class="c n" style="left:1411.9px;width:46.1px">0</span></div>
<div class="r odd" style="top:342.45px"><span class="c n" style="left:0.0px;width:45.6px">361</span><span class="c ic1" style="left:45.6px;width:54.8px"><svg class="st" viewBox="0 0 16 16"><circle cx="8" cy="8" r="6.9" fill="#fff" stroke="#84d465" stroke-width="1.25"/><path d="M4.9 8.4l2.2 2.2 4-4.4" fill="none" stroke="#84d465" stroke-width="1.3"/></svg></span><span class="c ic2" style="left:100.4px;width:54.5px"><svg class="dc" viewBox="0 0 14 16"><rect x="1.1" y="1.1" width="11.8" height="13.9" fill="#fff" stroke="#8a8f97" stroke-width="1.2"/><path d="M2 2.3h10" stroke="#5a6068" stroke-width="1.9" stroke-dasharray="1.5 .7"/><path d="M3.4 5.8h7.2M3.4 7.8h7.2M3.4 9.8h7.2M3.4 11.8h7.2" stroke="#a9adb2" stroke-width="1.05"/></svg></span><span class="c n" style="left:154.9px;width:114.1px">10218</span><span class="c d" style="left:269.0px;width:82.2px">09.12.2025</span><span class="c t" style="left:351.2px;width:91.4px;letter-spacing:0.408px">Company fro...</span><span class="c t" style="left:442.6px;width:102.0px;letter-spacing:0.398px">Rechnung</span><span class="c n" style="left:544.6px;width:73.0px">15&#x27;161.03</span><span class="c t" style="left:617.6px;width:73.2px;letter-spacing:-0.559px">CHF</span><span class="c t" style="left:782.0px;width:73.4px;letter-spacing:0.195px">DHL</span><span class="c n lk" style="left:855.4px;width:73.0px"><u>341</u></span><span class="c n lk" style="left:928.4px;width:91.2px"><u>0</u></span><span class="c n" style="left:1019.6px;width:109.6px">0</span><span class="c n" style="left:1129.2px;width:100.1px">0</span><span class="c d" style="left:1229.3px;width:90.9px;letter-spacing:-0.132px">09.12.2025 11:...</span><span class="c d" style="left:1320.2px;width:91.7px;letter-spacing:-0.132px">09.12.2025 11:...</span><span class="c n" style="left:1411.9px;width:46.1px">0</span></div>
<div class="r" style="top:365.28px"><span class="c n" style="left:0.0px;width:45.6px">360</span><span class="c ic1" style="left:45.6px;width:54.8px"><svg class="st" viewBox="0 0 16 16"><circle cx="8" cy="8" r="6.9" fill="#fff" stroke="#84d465" stroke-width="1.25"/><path d="M4.9 8.4l2.2 2.2 4-4.4" fill="none" stroke="#84d465" stroke-width="1.3"/></svg></span><span class="c ic2" style="left:100.4px;width:54.5px"><svg class="dc" viewBox="0 0 14 16"><rect x="1.1" y="1.1" width="11.8" height="13.9" fill="#fff" stroke="#8a8f97" stroke-width="1.2"/><path d="M2 2.3h10" stroke="#5a6068" stroke-width="1.9" stroke-dasharray="1.5 .7"/><path d="M3.4 5.8h7.2M3.4 7.8h7.2M3.4 9.8h7.2M3.4 11.8h7.2" stroke="#a9adb2" stroke-width="1.05"/></svg></span><span class="c n" style="left:154.9px;width:114.1px">10217</span><span class="c d" style="left:269.0px;width:82.2px">09.12.2025</span><span class="c t" style="left:351.2px;width:91.4px;letter-spacing:0.408px">Company fro...</span><span class="c t" style="left:442.6px;width:102.0px;letter-spacing:0.398px">Rechnung</span><span class="c n" style="left:544.6px;width:73.0px">15&#x27;161.03</span><span class="c t" style="left:617.6px;width:73.2px;letter-spacing:-0.559px">CHF</span><span class="c t" style="left:782.0px;width:73.4px;letter-spacing:0.195px">DHL</span><span class="c n lk" style="left:855.4px;width:73.0px"><u>341</u></span><span class="c n lk" style="left:928.4px;width:91.2px"><u>0</u></span><span class="c n" style="left:1019.6px;width:109.6px">0</span><span class="c n" style="left:1129.2px;width:100.1px">0</span><span class="c d" style="left:1229.3px;width:90.9px;letter-spacing:-0.132px">09.12.2025 11:...</span><span class="c d" style="left:1320.2px;width:91.7px;letter-spacing:-0.132px">09.12.2025 11:...</span><span class="c n" style="left:1411.9px;width:46.1px">0</span></div>
<div class="r odd" style="top:388.11px"><span class="c n" style="left:0.0px;width:45.6px">359</span><span class="c ic1" style="left:45.6px;width:54.8px"><svg class="st" viewBox="0 0 16 16"><circle cx="8" cy="8" r="6.9" fill="#fff" stroke="#f06a6a" stroke-width="1.25"/><path d="M8 3.9v5.7" fill="none" stroke="#f06a6a" stroke-width="1.5"/><circle cx="8" cy="11.9" r=".95" fill="#f06a6a"/></svg></span><span class="c ic2" style="left:100.4px;width:54.5px"><svg class="dc" viewBox="0 0 14 16"><rect x="1.1" y="1.1" width="11.8" height="13.9" fill="#fff" stroke="#8a8f97" stroke-width="1.2"/><path d="M2 2.3h10" stroke="#5a6068" stroke-width="1.9" stroke-dasharray="1.5 .7"/><path d="M3.4 5.8h7.2M3.4 7.8h7.2M3.4 9.8h7.2M3.4 11.8h7.2" stroke="#a9adb2" stroke-width="1.05"/></svg></span><span class="c n" style="left:154.9px;width:114.1px">10216</span><span class="c d" style="left:269.0px;width:82.2px">09.12.2025</span><span class="c t" style="left:351.2px;width:91.4px;letter-spacing:0.408px">Company fro...</span><span class="c t" style="left:442.6px;width:102.0px;letter-spacing:0.398px">Rechnung</span><span class="c n" style="left:544.6px;width:73.0px">15&#x27;161.03</span><span class="c t" style="left:617.6px;width:73.2px;letter-spacing:-0.559px">CHF</span><span class="c t" style="left:782.0px;width:73.4px;letter-spacing:0.195px">DHL</span><span class="c n lk" style="left:855.4px;width:73.0px"><u>341</u></span><span class="c n lk" style="left:928.4px;width:91.2px"><u>0</u></span><span class="c n" style="left:1019.6px;width:109.6px">0</span><span class="c n" style="left:1129.2px;width:100.1px">0</span><span class="c d" style="left:1229.3px;width:90.9px;letter-spacing:-0.132px">09.12.2025 11:...</span><span class="c d" style="left:1320.2px;width:91.7px;letter-spacing:-0.132px">09.12.2025 11:...</span><span class="c n" style="left:1411.9px;width:46.1px">0</span></div>
<div class="r" style="top:410.94px"><span class="c n" style="left:0.0px;width:45.6px">358</span><span class="c ic1" style="left:45.6px;width:54.8px"><svg class="st" viewBox="0 0 16 16"><circle cx="8" cy="8" r="6.9" fill="#fff" stroke="#84d465" stroke-width="1.25"/><path d="M4.9 8.4l2.2 2.2 4-4.4" fill="none" stroke="#84d465" stroke-width="1.3"/></svg></span><span class="c ic2" style="left:100.4px;width:54.5px"><svg class="dc" viewBox="0 0 14 16"><rect x="1.1" y="1.1" width="11.8" height="13.9" fill="#fff" stroke="#8a8f97" stroke-width="1.2"/><path d="M2 2.3h10" stroke="#5a6068" stroke-width="1.9" stroke-dasharray="1.5 .7"/><path d="M3.4 5.8h7.2M3.4 7.8h7.2M3.4 9.8h7.2M3.4 11.8h7.2" stroke="#a9adb2" stroke-width="1.05"/></svg></span><span class="c n" style="left:154.9px;width:114.1px">10215</span><span class="c d" style="left:269.0px;width:82.2px">09.12.2025</span><span class="c t" style="left:351.2px;width:91.4px;letter-spacing:0.408px">Company fro...</span><span class="c t" style="left:442.6px;width:102.0px;letter-spacing:0.398px">Rechnung</span><span class="c n" style="left:544.6px;width:73.0px">15&#x27;161.03</span><span class="c t" style="left:617.6px;width:73.2px;letter-spacing:-0.559px">CHF</span><span class="c t" style="left:782.0px;width:73.4px;letter-spacing:0.195px">DHL</span><span class="c n lk" style="left:855.4px;width:73.0px"><u>341</u></span><span class="c n lk" style="left:928.4px;width:91.2px"><u>0</u></span><span class="c n" style="left:1019.6px;width:109.6px">0</span><span class="c n" style="left:1129.2px;width:100.1px">0</span><span class="c d" style="left:1229.3px;width:90.9px;letter-spacing:-0.132px">09.12.2025 10:...</span><span class="c d" style="left:1320.2px;width:91.7px;letter-spacing:-0.132px">09.12.2025 10:...</span><span class="c n" style="left:1411.9px;width:46.1px">0</span></div>
<div class="r odd" style="top:433.77px"><span class="c n" style="left:0.0px;width:45.6px">357</span><span class="c ic1" style="left:45.6px;width:54.8px"><svg class="st" viewBox="0 0 16 16"><circle cx="8" cy="8" r="6.9" fill="#fff" stroke="#84d465" stroke-width="1.25"/><path d="M4.9 8.4l2.2 2.2 4-4.4" fill="none" stroke="#84d465" stroke-width="1.3"/></svg></span><span class="c ic2" style="left:100.4px;width:54.5px"><svg class="dc" viewBox="0 0 14 16"><rect x="1.1" y="1.1" width="11.8" height="13.9" fill="#fff" stroke="#8a8f97" stroke-width="1.2"/><path d="M2 2.3h10" stroke="#5a6068" stroke-width="1.9" stroke-dasharray="1.5 .7"/><path d="M3.4 5.8h7.2M3.4 7.8h7.2M3.4 9.8h7.2M3.4 11.8h7.2" stroke="#a9adb2" stroke-width="1.05"/></svg></span><span class="c n" style="left:154.9px;width:114.1px">10214</span><span class="c d" style="left:269.0px;width:82.2px">09.12.2025</span><span class="c t" style="left:351.2px;width:91.4px;letter-spacing:0.408px">Company fro...</span><span class="c t" style="left:442.6px;width:102.0px;letter-spacing:0.398px">Rechnung</span><span class="c n" style="left:544.6px;width:73.0px">30&#x27;295.03</span><span class="c t" style="left:617.6px;width:73.2px;letter-spacing:-0.559px">CHF</span><span class="c t" style="left:782.0px;width:73.4px;letter-spacing:0.195px">DHL</span><span class="c n lk" style="left:855.4px;width:73.0px"><u>341</u></span><span class="c n lk" style="left:928.4px;width:91.2px"><u>0</u></span><span class="c n" style="left:1019.6px;width:109.6px">0</span><span class="c n" style="left:1129.2px;width:100.1px">0</span><span class="c d" style="left:1229.3px;width:90.9px;letter-spacing:-0.132px">09.12.2025 10:...</span><span class="c d" style="left:1320.2px;width:91.7px;letter-spacing:-0.132px">09.12.2025 10:...</span><span class="c n" style="left:1411.9px;width:46.1px">0</span></div>
<div class="r" style="top:456.60px"><span class="c n" style="left:0.0px;width:45.6px">356</span><span class="c ic1" style="left:45.6px;width:54.8px"><svg class="st" viewBox="0 0 16 16"><circle cx="8" cy="8" r="6.9" fill="#fff" stroke="#84d465" stroke-width="1.25"/><path d="M4.9 8.4l2.2 2.2 4-4.4" fill="none" stroke="#84d465" stroke-width="1.3"/></svg></span><span class="c ic2" style="left:100.4px;width:54.5px"><svg class="dc" viewBox="0 0 14 16"><rect x="1.1" y="1.1" width="11.8" height="13.9" fill="#fff" stroke="#8a8f97" stroke-width="1.2"/><path d="M2 2.3h10" stroke="#5a6068" stroke-width="1.9" stroke-dasharray="1.5 .7"/><path d="M3.4 5.8h7.2M3.4 7.8h7.2M3.4 9.8h7.2M3.4 11.8h7.2" stroke="#a9adb2" stroke-width="1.05"/></svg></span><span class="c n" style="left:154.9px;width:114.1px">10213</span><span class="c d" style="left:269.0px;width:82.2px">09.12.2025</span><span class="c t" style="left:351.2px;width:91.4px;letter-spacing:0.408px">Company fro...</span><span class="c t" style="left:442.6px;width:102.0px;letter-spacing:0.398px">Rechnung</span><span class="c n" style="left:544.6px;width:73.0px">15&#x27;161.03</span><span class="c t" style="left:617.6px;width:73.2px;letter-spacing:-0.559px">CHF</span><span class="c t" style="left:782.0px;width:73.4px;letter-spacing:0.195px">DHL</span><span class="c n lk" style="left:855.4px;width:73.0px"><u>341</u></span><span class="c n lk" style="left:928.4px;width:91.2px"><u>0</u></span><span class="c n" style="left:1019.6px;width:109.6px">0</span><span class="c n" style="left:1129.2px;width:100.1px">0</span><span class="c d" style="left:1229.3px;width:90.9px;letter-spacing:-0.132px">09.12.2025 10:...</span><span class="c d" style="left:1320.2px;width:91.7px;letter-spacing:-0.132px">09.12.2025 10:...</span><span class="c n" style="left:1411.9px;width:46.1px">0</span></div>
<div class="r odd" style="top:479.43px"><span class="c n" style="left:0.0px;width:45.6px">355</span><span class="c ic1" style="left:45.6px;width:54.8px"><svg class="st" viewBox="0 0 16 16"><circle cx="8" cy="8" r="6.9" fill="#fff" stroke="#84d465" stroke-width="1.25"/><path d="M4.9 8.4l2.2 2.2 4-4.4" fill="none" stroke="#84d465" stroke-width="1.3"/></svg></span><span class="c ic2" style="left:100.4px;width:54.5px"><svg class="dc" viewBox="0 0 14 16"><rect x="1.1" y="1.1" width="11.8" height="13.9" fill="#fff" stroke="#8a8f97" stroke-width="1.2"/><path d="M2 2.3h10" stroke="#5a6068" stroke-width="1.9" stroke-dasharray="1.5 .7"/><path d="M3.4 5.8h7.2M3.4 7.8h7.2M3.4 9.8h7.2M3.4 11.8h7.2" stroke="#a9adb2" stroke-width="1.05"/></svg></span><span class="c n" style="left:154.9px;width:114.1px">10212</span><span class="c d" style="left:269.0px;width:82.2px">09.12.2025</span><span class="c t" style="left:351.2px;width:91.4px;letter-spacing:0.408px">Company fro...</span><span class="c t" style="left:442.6px;width:102.0px;letter-spacing:0.398px">Rechnung</span><span class="c n" style="left:544.6px;width:73.0px">15&#x27;161.03</span><span class="c t" style="left:617.6px;width:73.2px;letter-spacing:-0.559px">CHF</span><span class="c t" style="left:782.0px;width:73.4px;letter-spacing:0.195px">DHL</span><span class="c n lk" style="left:855.4px;width:73.0px"><u>341</u></span><span class="c n lk" style="left:928.4px;width:91.2px"><u>0</u></span><span class="c n" style="left:1019.6px;width:109.6px">0</span><span class="c n" style="left:1129.2px;width:100.1px">0</span><span class="c d" style="left:1229.3px;width:90.9px;letter-spacing:-0.132px">09.12.2025 10:...</span><span class="c d" style="left:1320.2px;width:91.7px;letter-spacing:-0.132px">09.12.2025 10:...</span><span class="c n" style="left:1411.9px;width:46.1px">0</span></div>
<div class="r" style="top:502.26px"><span class="c n" style="left:0.0px;width:45.6px">354</span><span class="c ic1" style="left:45.6px;width:54.8px"><svg class="st" viewBox="0 0 16 16"><circle cx="8" cy="8" r="6.9" fill="#fff" stroke="#84d465" stroke-width="1.25"/><path d="M4.9 8.4l2.2 2.2 4-4.4" fill="none" stroke="#84d465" stroke-width="1.3"/></svg></span><span class="c ic2" style="left:100.4px;width:54.5px"><svg class="dc" viewBox="0 0 14 16"><rect x="1.1" y="1.1" width="11.8" height="13.9" fill="#fff" stroke="#8a8f97" stroke-width="1.2"/><path d="M2 2.3h10" stroke="#5a6068" stroke-width="1.9" stroke-dasharray="1.5 .7"/><path d="M3.4 5.8h7.2M3.4 7.8h7.2M3.4 9.8h7.2M3.4 11.8h7.2" stroke="#a9adb2" stroke-width="1.05"/></svg></span><span class="c n" style="left:154.9px;width:114.1px">10211</span><span class="c d" style="left:269.0px;width:82.2px">09.12.2025</span><span class="c t" style="left:351.2px;width:91.4px;letter-spacing:0.408px">Company fro...</span><span class="c t" style="left:442.6px;width:102.0px;letter-spacing:0.398px">Rechnung</span><span class="c n" style="left:544.6px;width:73.0px">15&#x27;161.03</span><span class="c t" style="left:617.6px;width:73.2px;letter-spacing:-0.559px">CHF</span><span class="c t" style="left:782.0px;width:73.4px;letter-spacing:0.195px">DHL</span><span class="c n lk" style="left:855.4px;width:73.0px"><u>341</u></span><span class="c n lk" style="left:928.4px;width:91.2px"><u>0</u></span><span class="c n" style="left:1019.6px;width:109.6px">0</span><span class="c n" style="left:1129.2px;width:100.1px">0</span><span class="c d" style="left:1229.3px;width:90.9px;letter-spacing:-0.132px">09.12.2025 10:...</span><span class="c d" style="left:1320.2px;width:91.7px;letter-spacing:-0.132px">09.12.2025 10:...</span><span class="c n" style="left:1411.9px;width:46.1px">0</span></div>
<div class="r odd" style="top:525.09px"><span class="c n" style="left:0.0px;width:45.6px">353</span><span class="c ic1" style="left:45.6px;width:54.8px"><svg class="st" viewBox="0 0 16 16"><circle cx="8" cy="8" r="6.9" fill="#fff" stroke="#84d465" stroke-width="1.25"/><path d="M4.9 8.4l2.2 2.2 4-4.4" fill="none" stroke="#84d465" stroke-width="1.3"/></svg></span><span class="c ic2" style="left:100.4px;width:54.5px"><svg class="dc" viewBox="0 0 14 16"><rect x="1.1" y="1.1" width="11.8" height="13.9" fill="#fff" stroke="#8a8f97" stroke-width="1.2"/><path d="M2 2.3h10" stroke="#5a6068" stroke-width="1.9" stroke-dasharray="1.5 .7"/><path d="M3.4 5.8h7.2M3.4 7.8h7.2M3.4 9.8h7.2M3.4 11.8h7.2" stroke="#a9adb2" stroke-width="1.05"/></svg></span><span class="c n" style="left:154.9px;width:114.1px">10210</span><span class="c d" style="left:269.0px;width:82.2px">09.12.2025</span><span class="c t" style="left:351.2px;width:91.4px;letter-spacing:0.408px">Company fro...</span><span class="c t" style="left:442.6px;width:102.0px;letter-spacing:0.398px">Rechnung</span><span class="c n" style="left:544.6px;width:73.0px">15&#x27;161.03</span><span class="c t" style="left:617.6px;width:73.2px;letter-spacing:-0.559px">CHF</span><span class="c t" style="left:782.0px;width:73.4px;letter-spacing:0.195px">DHL</span><span class="c n lk" style="left:855.4px;width:73.0px"><u>341</u></span><span class="c n lk" style="left:928.4px;width:91.2px"><u>0</u></span><span class="c n" style="left:1019.6px;width:109.6px">0</span><span class="c n" style="left:1129.2px;width:100.1px">0</span><span class="c d" style="left:1229.3px;width:90.9px;letter-spacing:-0.132px">09.12.2025 10:...</span><span class="c d" style="left:1320.2px;width:91.7px;letter-spacing:-0.132px">09.12.2025 10:...</span><span class="c n" style="left:1411.9px;width:46.1px">0</span></div>
<div class="r" style="top:547.92px"><span class="c n" style="left:0.0px;width:45.6px">352</span><span class="c ic1" style="left:45.6px;width:54.8px"><svg class="st" viewBox="0 0 16 16"><circle cx="8" cy="8" r="6.9" fill="#fff" stroke="#84d465" stroke-width="1.25"/><path d="M4.9 8.4l2.2 2.2 4-4.4" fill="none" stroke="#84d465" stroke-width="1.3"/></svg></span><span class="c ic2" style="left:100.4px;width:54.5px"><svg class="dc" viewBox="0 0 14 16"><rect x="1.1" y="1.1" width="11.8" height="13.9" fill="#fff" stroke="#8a8f97" stroke-width="1.2"/><path d="M2 2.3h10" stroke="#5a6068" stroke-width="1.9" stroke-dasharray="1.5 .7"/><path d="M3.4 5.8h7.2M3.4 7.8h7.2M3.4 9.8h7.2M3.4 11.8h7.2" stroke="#a9adb2" stroke-width="1.05"/></svg></span><span class="c n" style="left:154.9px;width:114.1px">10209</span><span class="c d" style="left:269.0px;width:82.2px">09.12.2025</span><span class="c t" style="left:351.2px;width:91.4px;letter-spacing:0.408px">Company fro...</span><span class="c t" style="left:442.6px;width:102.0px;letter-spacing:0.398px">Rechnung</span><span class="c n" style="left:544.6px;width:73.0px">15&#x27;161.03</span><span class="c t" style="left:617.6px;width:73.2px;letter-spacing:-0.559px">CHF</span><span class="c t" style="left:782.0px;width:73.4px;letter-spacing:0.195px">DHL</span><span class="c n lk" style="left:855.4px;width:73.0px"><u>341</u></span><span class="c n lk" style="left:928.4px;width:91.2px"><u>0</u></span><span class="c n" style="left:1019.6px;width:109.6px">0</span><span class="c n" style="left:1129.2px;width:100.1px">0</span><span class="c d" style="left:1229.3px;width:90.9px;letter-spacing:-0.132px">09.12.2025 10:...</span><span class="c d" style="left:1320.2px;width:91.7px;letter-spacing:-0.132px">09.12.2025 10:...</span><span class="c n" style="left:1411.9px;width:46.1px">0</span></div>
<div class="r odd" style="top:570.75px"><span class="c n" style="left:0.0px;width:45.6px">351</span><span class="c ic1" style="left:45.6px;width:54.8px"><svg class="st" viewBox="0 0 16 16"><circle cx="8" cy="8" r="6.9" fill="#fff" stroke="#f06a6a" stroke-width="1.25"/><path d="M8 3.9v5.7" fill="none" stroke="#f06a6a" stroke-width="1.5"/><circle cx="8" cy="11.9" r=".95" fill="#f06a6a"/></svg></span><span class="c ic2" style="left:100.4px;width:54.5px"><svg class="dc" viewBox="0 0 14 16"><rect x="1.1" y="1.1" width="11.8" height="13.9" fill="#fff" stroke="#8a8f97" stroke-width="1.2"/><path d="M2 2.3h10" stroke="#5a6068" stroke-width="1.9" stroke-dasharray="1.5 .7"/><path d="M3.4 5.8h7.2M3.4 7.8h7.2M3.4 9.8h7.2M3.4 11.8h7.2" stroke="#a9adb2" stroke-width="1.05"/></svg></span><span class="c n" style="left:154.9px;width:114.1px">10208</span><span class="c d" style="left:269.0px;width:82.2px">09.12.2025</span><span class="c t" style="left:351.2px;width:91.4px;letter-spacing:0.408px">Company fro...</span><span class="c t" style="left:442.6px;width:102.0px;letter-spacing:0.398px">Rechnung</span><span class="c n" style="left:544.6px;width:73.0px">15&#x27;161.03</span><span class="c t" style="left:617.6px;width:73.2px;letter-spacing:-0.559px">CHF</span><span class="c t" style="left:782.0px;width:73.4px;letter-spacing:0.195px">DHL</span><span class="c n lk" style="left:855.4px;width:73.0px"><u>341</u></span><span class="c n lk" style="left:928.4px;width:91.2px"><u>0</u></span><span class="c n" style="left:1019.6px;width:109.6px">0</span><span class="c n" style="left:1129.2px;width:100.1px">0</span><span class="c d" style="left:1229.3px;width:90.9px;letter-spacing:-0.132px">09.12.2025 09:...</span><span class="c d" style="left:1320.2px;width:91.7px;letter-spacing:-0.132px">09.12.2025 09:...</span><span class="c n" style="left:1411.9px;width:46.1px">0</span></div>
<div class="r" style="top:593.58px"><span class="c n" style="left:0.0px;width:45.6px">350</span><span class="c ic1" style="left:45.6px;width:54.8px"><svg class="st" viewBox="0 0 16 16"><circle cx="8" cy="8" r="6.9" fill="#fff" stroke="#84d465" stroke-width="1.25"/><path d="M4.9 8.4l2.2 2.2 4-4.4" fill="none" stroke="#84d465" stroke-width="1.3"/></svg></span><span class="c ic2" style="left:100.4px;width:54.5px"><svg class="dc" viewBox="0 0 14 16"><rect x="1.1" y="1.1" width="11.8" height="13.9" fill="#fff" stroke="#8a8f97" stroke-width="1.2"/><path d="M2 2.3h10" stroke="#5a6068" stroke-width="1.9" stroke-dasharray="1.5 .7"/><path d="M3.4 5.8h7.2M3.4 7.8h7.2M3.4 9.8h7.2M3.4 11.8h7.2" stroke="#a9adb2" stroke-width="1.05"/></svg></span><span class="c n" style="left:154.9px;width:114.1px">10207</span><span class="c d" style="left:269.0px;width:82.2px">09.12.2025</span><span class="c t" style="left:351.2px;width:91.4px;letter-spacing:0.408px">Company fro...</span><span class="c t" style="left:442.6px;width:102.0px;letter-spacing:0.398px">Rechnung</span><span class="c n" style="left:544.6px;width:73.0px">15&#x27;161.03</span><span class="c t" style="left:617.6px;width:73.2px;letter-spacing:-0.559px">CHF</span><span class="c t" style="left:782.0px;width:73.4px;letter-spacing:0.195px">DHL</span><span class="c n lk" style="left:855.4px;width:73.0px"><u>341</u></span><span class="c n lk" style="left:928.4px;width:91.2px"><u>0</u></span><span class="c n" style="left:1019.6px;width:109.6px">0</span><span class="c n" style="left:1129.2px;width:100.1px">0</span><span class="c d" style="left:1229.3px;width:90.9px;letter-spacing:-0.132px">09.12.2025 09:...</span><span class="c d" style="left:1320.2px;width:91.7px;letter-spacing:-0.132px">09.12.2025 09:...</span><span class="c n" style="left:1411.9px;width:46.1px">0</span></div>
<div class="r odd" style="top:616.41px"><span class="c n" style="left:0.0px;width:45.6px">349</span><span class="c ic1" style="left:45.6px;width:54.8px"><svg class="st" viewBox="0 0 16 16"><circle cx="8" cy="8" r="6.9" fill="#fff" stroke="#f06a6a" stroke-width="1.25"/><path d="M8 3.9v5.7" fill="none" stroke="#f06a6a" stroke-width="1.5"/><circle cx="8" cy="11.9" r=".95" fill="#f06a6a"/></svg></span><span class="c ic2" style="left:100.4px;width:54.5px"><svg class="dc" viewBox="0 0 14 16"><rect x="1.1" y="1.1" width="11.8" height="13.9" fill="#fff" stroke="#8a8f97" stroke-width="1.2"/><path d="M2 2.3h10" stroke="#5a6068" stroke-width="1.9" stroke-dasharray="1.5 .7"/><path d="M3.4 5.8h7.2M3.4 7.8h7.2M3.4 9.8h7.2M3.4 11.8h7.2" stroke="#a9adb2" stroke-width="1.05"/></svg></span><span class="c n" style="left:154.9px;width:114.1px">10206</span><span class="c d" style="left:269.0px;width:82.2px">09.12.2025</span><span class="c t" style="left:351.2px;width:91.4px;letter-spacing:0.408px">Company fro...</span><span class="c t" style="left:442.6px;width:102.0px;letter-spacing:0.398px">Rechnung</span><span class="c n" style="left:544.6px;width:73.0px">15&#x27;161.03</span><span class="c t" style="left:617.6px;width:73.2px;letter-spacing:-0.559px">CHF</span><span class="c t" style="left:782.0px;width:73.4px;letter-spacing:0.195px">DHL</span><span class="c n lk" style="left:855.4px;width:73.0px"><u>341</u></span><span class="c n lk" style="left:928.4px;width:91.2px"><u>0</u></span><span class="c n" style="left:1019.6px;width:109.6px">0</span><span class="c n" style="left:1129.2px;width:100.1px">0</span><span class="c d" style="left:1229.3px;width:90.9px;letter-spacing:-0.132px">09.12.2025 09:...</span><span class="c d" style="left:1320.2px;width:91.7px;letter-spacing:-0.132px">09.12.2025 09:...</span><span class="c n" style="left:1411.9px;width:46.1px">0</span></div>
<div class="r" style="top:639.24px"><span class="c n" style="left:0.0px;width:45.6px">348</span><span class="c ic1" style="left:45.6px;width:54.8px"><svg class="st" viewBox="0 0 16 16"><circle cx="8" cy="8" r="6.9" fill="#fff" stroke="#84d465" stroke-width="1.25"/><path d="M4.9 8.4l2.2 2.2 4-4.4" fill="none" stroke="#84d465" stroke-width="1.3"/></svg></span><span class="c ic2" style="left:100.4px;width:54.5px"><svg class="dc" viewBox="0 0 14 16"><rect x="1.1" y="1.1" width="11.8" height="13.9" fill="#fff" stroke="#8a8f97" stroke-width="1.2"/><path d="M2 2.3h10" stroke="#5a6068" stroke-width="1.9" stroke-dasharray="1.5 .7"/><path d="M3.4 5.8h7.2M3.4 7.8h7.2M3.4 9.8h7.2M3.4 11.8h7.2" stroke="#a9adb2" stroke-width="1.05"/></svg></span><span class="c n" style="left:154.9px;width:114.1px">10205</span><span class="c d" style="left:269.0px;width:82.2px">09.12.2025</span><span class="c t" style="left:351.2px;width:91.4px;letter-spacing:0.408px">Company fro...</span><span class="c t" style="left:442.6px;width:102.0px;letter-spacing:0.398px">Rechnung</span><span class="c n" style="left:544.6px;width:73.0px">15&#x27;161.03</span><span class="c t" style="left:617.6px;width:73.2px;letter-spacing:-0.559px">CHF</span><span class="c t" style="left:782.0px;width:73.4px;letter-spacing:0.195px">DHL</span><span class="c n lk" style="left:855.4px;width:73.0px"><u>341</u></span><span class="c n lk" style="left:928.4px;width:91.2px"><u>0</u></span><span class="c n" style="left:1019.6px;width:109.6px">0</span><span class="c n" style="left:1129.2px;width:100.1px">0</span><span class="c d" style="left:1229.3px;width:90.9px;letter-spacing:-0.132px">09.12.2025 09:...</span><span class="c d" style="left:1320.2px;width:91.7px;letter-spacing:-0.132px">09.12.2025 09:...</span><span class="c n" style="left:1411.9px;width:46.1px">0</span></div>
<div class="r odd" style="top:662.07px"><span class="c n" style="left:0.0px;width:45.6px">347</span><span class="c ic1" style="left:45.6px;width:54.8px"><svg class="st" viewBox="0 0 16 16"><circle cx="8" cy="8" r="6.9" fill="#fff" stroke="#f06a6a" stroke-width="1.25"/><path d="M8 3.9v5.7" fill="none" stroke="#f06a6a" stroke-width="1.5"/><circle cx="8" cy="11.9" r=".95" fill="#f06a6a"/></svg></span><span class="c ic2" style="left:100.4px;width:54.5px"><svg class="dc" viewBox="0 0 14 16"><rect x="1.1" y="1.1" width="11.8" height="13.9" fill="#fff" stroke="#8a8f97" stroke-width="1.2"/><path d="M2 2.3h10" stroke="#5a6068" stroke-width="1.9" stroke-dasharray="1.5 .7"/><path d="M3.4 5.8h7.2M3.4 7.8h7.2M3.4 9.8h7.2M3.4 11.8h7.2" stroke="#a9adb2" stroke-width="1.05"/></svg></span><span class="c n" style="left:154.9px;width:114.1px">10204</span><span class="c d" style="left:269.0px;width:82.2px">09.12.2025</span><span class="c t" style="left:351.2px;width:91.4px;letter-spacing:0.408px">Company fro...</span><span class="c t" style="left:442.6px;width:102.0px;letter-spacing:0.398px">Rechnung</span><span class="c n" style="left:544.6px;width:73.0px">15&#x27;161.03</span><span class="c t" style="left:617.6px;width:73.2px;letter-spacing:-0.559px">CHF</span><span class="c t" style="left:782.0px;width:73.4px;letter-spacing:0.195px">DHL</span><span class="c n lk" style="left:855.4px;width:73.0px"><u>341</u></span><span class="c n lk" style="left:928.4px;width:91.2px"><u>0</u></span><span class="c n" style="left:1019.6px;width:109.6px">0</span><span class="c n" style="left:1129.2px;width:100.1px">0</span><span class="c d" style="left:1229.3px;width:90.9px;letter-spacing:-0.132px">09.12.2025 09:...</span><span class="c d" style="left:1320.2px;width:91.7px;letter-spacing:-0.132px">09.12.2025 09:...</span><span class="c n" style="left:1411.9px;width:46.1px">0</span></div>
<div class="r" style="top:684.90px"><span class="c n" style="left:0.0px;width:45.6px">346</span><span class="c ic1" style="left:45.6px;width:54.8px"><svg class="st" viewBox="0 0 16 16"><circle cx="8" cy="8" r="6.9" fill="#fff" stroke="#84d465" stroke-width="1.25"/><path d="M4.9 8.4l2.2 2.2 4-4.4" fill="none" stroke="#84d465" stroke-width="1.3"/></svg></span><span class="c ic2" style="left:100.4px;width:54.5px"><svg class="dc" viewBox="0 0 14 16"><rect x="1.1" y="1.1" width="11.8" height="13.9" fill="#fff" stroke="#8a8f97" stroke-width="1.2"/><path d="M2 2.3h10" stroke="#5a6068" stroke-width="1.9" stroke-dasharray="1.5 .7"/><path d="M3.4 5.8h7.2M3.4 7.8h7.2M3.4 9.8h7.2M3.4 11.8h7.2" stroke="#a9adb2" stroke-width="1.05"/></svg></span><span class="c n" style="left:154.9px;width:114.1px">10203</span><span class="c d" style="left:269.0px;width:82.2px">09.12.2025</span><span class="c t" style="left:351.2px;width:91.4px;letter-spacing:0.408px">Company fro...</span><span class="c t" style="left:442.6px;width:102.0px;letter-spacing:0.398px">Rechnung</span><span class="c n" style="left:544.6px;width:73.0px">15&#x27;161.03</span><span class="c t" style="left:617.6px;width:73.2px;letter-spacing:-0.559px">CHF</span><span class="c t" style="left:782.0px;width:73.4px;letter-spacing:0.195px">DHL</span><span class="c n lk" style="left:855.4px;width:73.0px"><u>341</u></span><span class="c n lk" style="left:928.4px;width:91.2px"><u>0</u></span><span class="c n" style="left:1019.6px;width:109.6px">0</span><span class="c n" style="left:1129.2px;width:100.1px">0</span><span class="c d" style="left:1229.3px;width:90.9px;letter-spacing:-0.132px">09.12.2025 09:...</span><span class="c d" style="left:1320.2px;width:91.7px;letter-spacing:-0.132px">09.12.2025 09:...</span><span class="c n" style="left:1411.9px;width:46.1px">0</span></div>
<div class="r odd" style="top:707.73px"><span class="c n" style="left:0.0px;width:45.6px">345</span><span class="c ic1" style="left:45.6px;width:54.8px"><svg class="st" viewBox="0 0 16 16"><circle cx="8" cy="8" r="6.9" fill="#fff" stroke="#f06a6a" stroke-width="1.25"/><path d="M8 3.9v5.7" fill="none" stroke="#f06a6a" stroke-width="1.5"/><circle cx="8" cy="11.9" r=".95" fill="#f06a6a"/></svg></span><span class="c ic2" style="left:100.4px;width:54.5px"><svg class="dc" viewBox="0 0 14 16"><rect x="1.1" y="1.1" width="11.8" height="13.9" fill="#fff" stroke="#8a8f97" stroke-width="1.2"/><path d="M2 2.3h10" stroke="#5a6068" stroke-width="1.9" stroke-dasharray="1.5 .7"/><path d="M3.4 5.8h7.2M3.4 7.8h7.2M3.4 9.8h7.2M3.4 11.8h7.2" stroke="#a9adb2" stroke-width="1.05"/></svg></span><span class="c n" style="left:154.9px;width:114.1px">10202</span><span class="c d" style="left:269.0px;width:82.2px">09.12.2025</span><span class="c t" style="left:351.2px;width:91.4px;letter-spacing:0.408px">Company fro...</span><span class="c t" style="left:442.6px;width:102.0px;letter-spacing:0.398px">Rechnung</span><span class="c n" style="left:544.6px;width:73.0px">15&#x27;161.03</span><span class="c t" style="left:617.6px;width:73.2px;letter-spacing:-0.559px">CHF</span><span class="c t" style="left:782.0px;width:73.4px;letter-spacing:0.195px">DHL</span><span class="c n lk" style="left:855.4px;width:73.0px"><u>341</u></span><span class="c n lk" style="left:928.4px;width:91.2px"><u>0</u></span><span class="c n" style="left:1019.6px;width:109.6px">0</span><span class="c n" style="left:1129.2px;width:100.1px">0</span><span class="c d" style="left:1229.3px;width:90.9px;letter-spacing:-0.132px">09.12.2025 09:...</span><span class="c d" style="left:1320.2px;width:91.7px;letter-spacing:-0.132px">09.12.2025 09:...</span><span class="c n" style="left:1411.9px;width:46.1px">0</span></div>
<div class="r" style="top:730.56px"><span class="c n" style="left:0.0px;width:45.6px">344</span><span class="c ic1" style="left:45.6px;width:54.8px"><svg class="st" viewBox="0 0 16 16"><circle cx="8" cy="8" r="6.9" fill="#fff" stroke="#84d465" stroke-width="1.25"/><path d="M4.9 8.4l2.2 2.2 4-4.4" fill="none" stroke="#84d465" stroke-width="1.3"/></svg></span><span class="c ic2" style="left:100.4px;width:54.5px"><svg class="dc" viewBox="0 0 14 16"><rect x="1.1" y="1.1" width="11.8" height="13.9" fill="#fff" stroke="#8a8f97" stroke-width="1.2"/><path d="M2 2.3h10" stroke="#5a6068" stroke-width="1.9" stroke-dasharray="1.5 .7"/><path d="M3.4 5.8h7.2M3.4 7.8h7.2M3.4 9.8h7.2M3.4 11.8h7.2" stroke="#a9adb2" stroke-width="1.05"/></svg></span><span class="c n" style="left:154.9px;width:114.1px">10201</span><span class="c d" style="left:269.0px;width:82.2px">09.12.2025</span><span class="c t" style="left:351.2px;width:91.4px;letter-spacing:0.408px">Company fro...</span><span class="c t" style="left:442.6px;width:102.0px;letter-spacing:0.398px">Rechnung</span><span class="c n" style="left:544.6px;width:73.0px">15&#x27;161.03</span><span class="c t" style="left:617.6px;width:73.2px;letter-spacing:-0.559px">CHF</span><span class="c t" style="left:782.0px;width:73.4px;letter-spacing:0.195px">DHL</span><span class="c n lk" style="left:855.4px;width:73.0px"><u>341</u></span><span class="c n lk" style="left:928.4px;width:91.2px"><u>0</u></span><span class="c n" style="left:1019.6px;width:109.6px">0</span><span class="c n" style="left:1129.2px;width:100.1px">0</span><span class="c d" style="left:1229.3px;width:90.9px;letter-spacing:-0.132px">09.12.2025 09:...</span><span class="c d" style="left:1320.2px;width:91.7px;letter-spacing:-0.132px">09.12.2025 09:...</span><span class="c n" style="left:1411.9px;width:46.1px">0</span></div>
<div class="r odd" style="top:753.39px"><span class="c n" style="left:0.0px;width:45.6px">343</span><span class="c ic1" style="left:45.6px;width:54.8px"><svg class="st" viewBox="0 0 16 16"><circle cx="8" cy="8" r="6.9" fill="#fff" stroke="#84d465" stroke-width="1.25"/><path d="M4.9 8.4l2.2 2.2 4-4.4" fill="none" stroke="#84d465" stroke-width="1.3"/></svg></span><span class="c ic2" style="left:100.4px;width:54.5px"><svg class="dc" viewBox="0 0 14 16"><rect x="1.1" y="1.1" width="11.8" height="13.9" fill="#fff" stroke="#8a8f97" stroke-width="1.2"/><path d="M2 2.3h10" stroke="#5a6068" stroke-width="1.9" stroke-dasharray="1.5 .7"/><path d="M3.4 5.8h7.2M3.4 7.8h7.2M3.4 9.8h7.2M3.4 11.8h7.2" stroke="#a9adb2" stroke-width="1.05"/></svg></span><span class="c n" style="left:154.9px;width:114.1px">10196</span><span class="c d" style="left:269.0px;width:82.2px">08.12.2025</span><span class="c t" style="left:351.2px;width:91.4px;letter-spacing:0.307px">LockeContact...</span><span class="c t" style="left:442.6px;width:102.0px;letter-spacing:0.398px">Rechnung</span><span class="c n" style="left:544.6px;width:73.0px">15&#x27;161.03</span><span class="c t" style="left:617.6px;width:73.2px;letter-spacing:-0.559px">CHF</span><span class="c t" style="left:782.0px;width:73.4px;letter-spacing:0.195px">DHL</span><span class="c n lk" style="left:855.4px;width:73.0px"><u>328</u></span><span class="c n lk" style="left:928.4px;width:91.2px"><u>0</u></span><span class="c n" style="left:1019.6px;width:109.6px">0</span><span class="c n" style="left:1129.2px;width:100.1px">0</span><span class="c d" style="left:1229.3px;width:90.9px;letter-spacing:-0.132px">09.12.2025 09:...</span><span class="c d" style="left:1320.2px;width:91.7px;letter-spacing:-0.132px">09.12.2025 09:...</span><span class="c n" style="left:1411.9px;width:46.1px">0</span></div>
<div class="r" style="top:776.22px"><span class="c n" style="left:0.0px;width:45.6px">341</span><span class="c ic1" style="left:45.6px;width:54.8px"><svg class="st" viewBox="0 0 16 16"><circle cx="8" cy="8" r="6.9" fill="#fff" stroke="#f06a6a" stroke-width="1.25"/><path d="M8 3.9v5.7" fill="none" stroke="#f06a6a" stroke-width="1.5"/><circle cx="8" cy="11.9" r=".95" fill="#f06a6a"/></svg></span><span class="c ic2" style="left:100.4px;width:54.5px"><svg class="dc" viewBox="0 0 14 16"><rect x="1.1" y="1.1" width="11.8" height="13.9" fill="#fff" stroke="#8a8f97" stroke-width="1.2"/><path d="M2 2.3h10" stroke="#5a6068" stroke-width="1.9" stroke-dasharray="1.5 .7"/><path d="M3.4 5.8h7.2M3.4 7.8h7.2M3.4 9.8h7.2M3.4 11.8h7.2" stroke="#a9adb2" stroke-width="1.05"/></svg></span><span class="c n" style="left:154.9px;width:114.1px">10220</span><span class="c d" style="left:269.0px;width:82.2px">08.12.2025</span><span class="c t" style="left:351.2px;width:91.4px;letter-spacing:0.209px">Locke08.12</span><span class="c t" style="left:442.6px;width:102.0px;letter-spacing:0.567px">Invoice</span><span class="c n" style="left:544.6px;width:73.0px">54.83</span><span class="c t" style="left:617.6px;width:73.2px;letter-spacing:-0.559px">CHF</span><span class="c t" style="left:782.0px;width:73.4px;letter-spacing:0.563px">Standard</span><span class="c n lk" style="left:855.4px;width:73.0px"><u>328</u></span><span class="c n lk" style="left:928.4px;width:91.2px"><u>0</u></span><span class="c n" style="left:1019.6px;width:109.6px">0</span><span class="c n" style="left:1129.2px;width:100.1px">0</span><span class="c d" style="left:1229.3px;width:90.9px;letter-spacing:-0.132px">08.12.2025 20:...</span><span class="c d" style="left:1320.2px;width:91.7px;letter-spacing:-0.132px">08.12.2025 20:...</span><span class="c n" style="left:1411.9px;width:46.1px">0</span></div>
<div class="r odd" style="top:799.05px"><span class="c n" style="left:0.0px;width:45.6px">339</span><span class="c ic1" style="left:45.6px;width:54.8px"><svg class="st" viewBox="0 0 16 16"><circle cx="8" cy="8" r="6.9" fill="#fff" stroke="#f06a6a" stroke-width="1.25"/><path d="M8 3.9v5.7" fill="none" stroke="#f06a6a" stroke-width="1.5"/><circle cx="8" cy="11.9" r=".95" fill="#f06a6a"/></svg></span><span class="c ic2" style="left:100.4px;width:54.5px"><svg class="dc" viewBox="0 0 14 16"><rect x="1.1" y="1.1" width="11.8" height="13.9" fill="#fff" stroke="#8a8f97" stroke-width="1.2"/><path d="M2 2.3h10" stroke="#5a6068" stroke-width="1.9" stroke-dasharray="1.5 .7"/><path d="M3.4 5.8h7.2M3.4 7.8h7.2M3.4 9.8h7.2M3.4 11.8h7.2" stroke="#a9adb2" stroke-width="1.05"/></svg></span><span class="c n" style="left:154.9px;width:114.1px">10219</span><span class="c d" style="left:269.0px;width:82.2px">08.12.2025</span><span class="c t" style="left:351.2px;width:91.4px;letter-spacing:0.209px">Locke08.12</span><span class="c t" style="left:442.6px;width:102.0px;letter-spacing:0.567px">Invoice</span><span class="c n" style="left:544.6px;width:73.0px">54.83</span><span class="c t" style="left:617.6px;width:73.2px;letter-spacing:-0.559px">CHF</span><span class="c t" style="left:782.0px;width:73.4px;letter-spacing:0.563px">Standard</span><span class="c n lk" style="left:855.4px;width:73.0px"><u>328</u></span><span class="c n lk" style="left:928.4px;width:91.2px"><u>0</u></span><span class="c n" style="left:1019.6px;width:109.6px">0</span><span class="c n" style="left:1129.2px;width:100.1px">0</span><span class="c d" style="left:1229.3px;width:90.9px;letter-spacing:-0.132px">08.12.2025 20:...</span><span class="c d" style="left:1320.2px;width:91.7px;letter-spacing:-0.132px">08.12.2025 20:...</span><span class="c n" style="left:1411.9px;width:46.1px">0</span></div>
<div class="r" style="top:821.88px"><span class="c n" style="left:0.0px;width:45.6px">338</span><span class="c ic1" style="left:45.6px;width:54.8px"><svg class="st" viewBox="0 0 16 16"><circle cx="8" cy="8" r="6.9" fill="#fff" stroke="#f06a6a" stroke-width="1.25"/><path d="M8 3.9v5.7" fill="none" stroke="#f06a6a" stroke-width="1.5"/><circle cx="8" cy="11.9" r=".95" fill="#f06a6a"/></svg></span><span class="c ic2" style="left:100.4px;width:54.5px"><svg class="dc" viewBox="0 0 14 16"><rect x="1.1" y="1.1" width="11.8" height="13.9" fill="#fff" stroke="#8a8f97" stroke-width="1.2"/><path d="M2 2.3h10" stroke="#5a6068" stroke-width="1.9" stroke-dasharray="1.5 .7"/><path d="M3.4 5.8h7.2M3.4 7.8h7.2M3.4 9.8h7.2M3.4 11.8h7.2" stroke="#a9adb2" stroke-width="1.05"/></svg></span><span class="c n" style="left:154.9px;width:114.1px">10218</span><span class="c d" style="left:269.0px;width:82.2px">08.12.2025</span><span class="c t" style="left:351.2px;width:91.4px;letter-spacing:0.209px">Locke08.12</span><span class="c t" style="left:442.6px;width:102.0px;letter-spacing:0.567px">Invoice</span><span class="c n" style="left:544.6px;width:73.0px">54.83</span><span class="c t" style="left:617.6px;width:73.2px;letter-spacing:-0.559px">CHF</span><span class="c t" style="left:782.0px;width:73.4px;letter-spacing:0.563px">Standard</span><span class="c n lk" style="left:855.4px;width:73.0px"><u>326</u></span><span class="c n lk" style="left:928.4px;width:91.2px"><u>0</u></span><span class="c n" style="left:1019.6px;width:109.6px">0</span><span class="c n" style="left:1129.2px;width:100.1px">0</span><span class="c d" style="left:1229.3px;width:90.9px;letter-spacing:-0.132px">08.12.2025 20:...</span><span class="c d" style="left:1320.2px;width:91.7px;letter-spacing:-0.132px">08.12.2025 20:...</span><span class="c n" style="left:1411.9px;width:46.1px">0</span></div>
</div>
</div>
<div id="abar"><span style="left:4.5px;letter-spacing:-0.158px">Process</span><span style="left:59.5px;letter-spacing:0.177px">Delete record</span></div>
<div class="abs" style="left:1387.5px;top:1061.5px;width:17.5px;height:1.2px;background:#cdcdcf"></div>
<div class="abs" style="left:238.6px;top:738px;width:2px;height:18px;background:#d8d8da"></div>
<span class="tab" style="left:257px;letter-spacing:0.228px">Info</span>
<span class="tab on" style="left:287px;width:80.7px;letter-spacing:-0.326px">Addresses</span>
<span class="tab" style="left:376.5px;letter-spacing:0.115px">Comment</span>
<span class="tab" style="left:452.5px;letter-spacing:-0.069px">Header data</span>
<span class="tab" style="left:541px;letter-spacing:0.205px">Items</span>
<span class="tab" style="left:593px;letter-spacing:0.164px">Attachments</span>
<div id="panel">
<div id="tree">
<div class="abs" style="left:15.25px;top:0;width:159.5px;height:20px;background:#d6d6d6"></div>
<svg class="abs" style="left:2.9px;top:7.2px" width="9" height="6.5" viewBox="0 0 8 6"><path d="M.7.9l3.3 3.6L7.3.9" fill="none" stroke="#333" stroke-width="1.2"/></svg>
<i class="dot" style="left:22.50px;top:5.6px;background:#747b86"></i>
<span class="tr" style="left:40.00px;top:0;letter-spacing:0.229px">Customer data (DNR:72)</span>
<i class="dot" style="left:38.90px;top:25.7px;background:#52c67c"></i>
<span class="tr" style="left:56.20px;top:20.05px;letter-spacing:0.402px">Customer address</span>
<i class="dot" style="left:38.90px;top:45.7px;background:#52c67c"></i>
<span class="tr" style="left:56.20px;top:40.1px;letter-spacing:0.314px">Supplier address</span>
<i class="dot" style="left:38.90px;top:65.8px;background:#52c67c"></i>
<span class="tr" style="left:56.20px;top:60.15px;letter-spacing:0.351px">Invoice address</span>
<svg class="abs" style="left:4.75px;top:86.2px" width="6" height="8" viewBox="0 0 6 8"><path d="M.9.7l3.6 3.3L.9 7.3" fill="none" stroke="#333" stroke-width="1.2"/></svg>
<i class="dot" style="left:22.50px;top:85.8px;background:#747b86"></i>
<span class="tr" style="left:40.00px;top:80.2px;letter-spacing:0.363px">Supplier data</span>
<div id="hsb"><b class="l"></b><b class="th"></b><b class="rr"></b>
<svg class="abs" style="left:4.5px;top:3.5px" width="5" height="7" viewBox="0 0 5 7"><path d="M4.4.4L.8 3.5l3.6 3.1z" fill="#c8c8c8"/></svg>
<svg class="abs" style="right:4.5px;top:3.5px" width="5" height="7" viewBox="0 0 5 7"><path d="M.6.4l3.6 3.1L.6 6.6z" fill="#c8c8c8"/></svg>
</div>
</div>
<div class="abs" style="left:258.2px;top:146px;width:2px;height:18px;background:#d8d8da"></div>
<span class="addrl" style="left:263.7px;letter-spacing:0.396px">Customer address</span>
<span class="addrl" style="left:505.6px;letter-spacing:0.314px">Supplier address</span>
<span class="addrl" style="left:746.7px;letter-spacing:0.358px">Invoice address</span>
<div class="addr" style="left:263.4px"><span style="letter-spacing:0.677px">Herr</span><br><span style="letter-spacing:0.503px">Address testing company</span><br><span style="letter-spacing:0.177px">Glärnischstrasse 1333a</span><br><span style="letter-spacing:-0.131px">CH-9500 Wil SG</span><br><span style="letter-spacing:-0.045px">(INR: 356)</span></div>
<div class="addr" style="left:505.4px"><span style="letter-spacing:0.677px">Herr</span><br><span style="letter-spacing:0.503px">Address testing company</span><br><span style="letter-spacing:0.502px">MartinLockeSame MartinLockeSame</span><br><span style="letter-spacing:0.177px">Glärnischstrasse 1333a</span><br><span style="letter-spacing:-0.131px">CH-9500 Wil SG</span><br><span style="letter-spacing:0.041px">(INR: 356, AKP:5/371)</span></div>
<div class="addr" style="left:746.2px;width:233px"><span style="letter-spacing:0.677px">Herr</span><br><span style="letter-spacing:0.452px">Address testing company Second</span><br><span style="letter-spacing:0.502px">MartinLockeSame MartinLockeSame</span><br><span style="letter-spacing:0.407px">address second street</span><br><span style="letter-spacing:0.097px">CH-9200 Wil</span><br><span style="letter-spacing:0.041px">(INR: 372, AKP:1/373)</span></div>
<div class="btn" style="left:264px;letter-spacing:0.139px">Edit</div>
<div class="btn" style="left:505.5px;letter-spacing:0.139px">Edit</div>
<div class="btn" style="left:746.6px;letter-spacing:0.139px">Edit</div>
</div>
<div id="edge"></div>
</div>
<svg id="cur" style="position:absolute;left:796px;top:598px" width="13.4" height="20.2" viewBox="0 0 12 18"><path d="M1 1v13.2l3.1-2.9 2.3 5.2 2-.9-2.3-5.1h4.3z" fill="#222" stroke="#fff" stroke-width=".9"/></svg>
</body></html>
